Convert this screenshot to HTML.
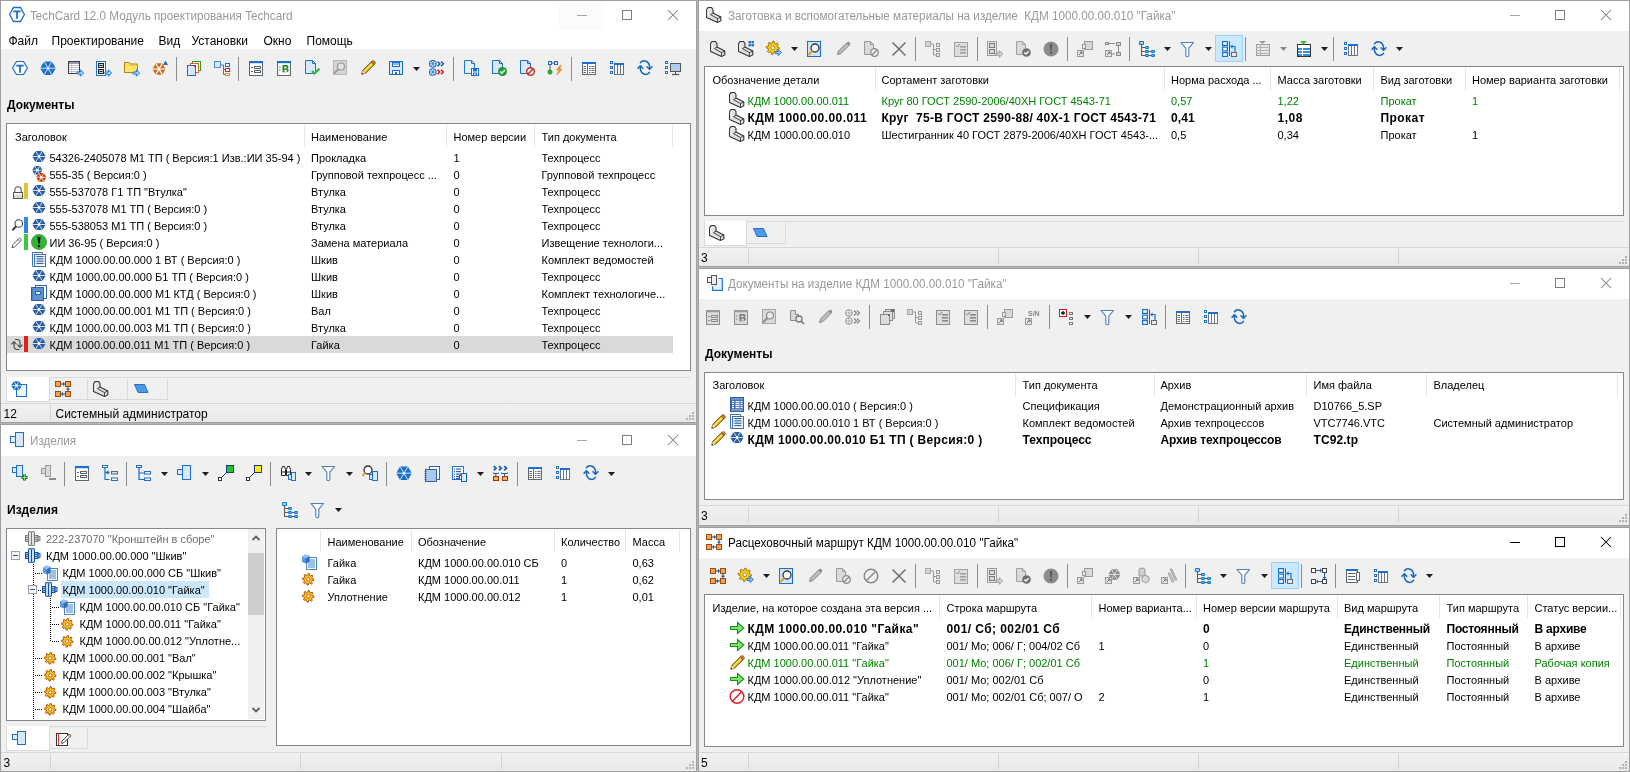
<!DOCTYPE html>
<html><head><meta charset="utf-8"><style>
html,body{margin:0;padding:0;width:1630px;height:772px;overflow:hidden;background:#f0f0f0;position:relative}
#w{position:absolute;left:0;top:0;width:1630px;height:772px;will-change:transform;overflow:hidden;background:#b6b6b6}
#w>div,#w>svg{position:absolute}
#w>svg{overflow:visible}
.t{white-space:pre;line-height:1;font-family:"Liberation Sans",sans-serif}
</style></head><body><div id="w">
<div style="left:0px;top:0px;width:697px;height:423px;background:#f0f0f0"></div>
<div style="left:0px;top:0px;width:697px;height:423px;border:1px solid #9f9f9f;box-sizing:border-box;"></div>
<div style="left:1px;top:1px;width:695px;height:29px;background:#fff"></div>
<svg style="left:9px;top:6px" width="16" height="16" viewBox="0 0 16 16"><polygon points="0.6,8.5 4.5,1.5 11.5,1.5 15.4,8.5 11.5,15.5 4.5,15.5" fill="#fbfbfb" stroke="#1c6fd1" stroke-width="1.3"/><path d="M4.3 4.5h7.4v1.8h-2.8v6.5h-1.8v-6.5h-2.8z" fill="#1c6fd1"/></svg>
<div class="t" style="left:30px;top:10.49px;font-size:12.3px;font-weight:400;color:#999;transform:scaleX(0.951);transform-origin:0 0;">TechCard 12.0 Модуль проектирования Techcard</div>
<div style="left:577px;top:15px;width:10px;height:1px;background:#a5a5a5"></div>
<div style="left:622px;top:10px;width:10px;height:10px;border:1px solid #7d7d7d;box-sizing:border-box;"></div>
<svg style="left:667px;top:9px" width="12" height="12" viewBox="0 0 12 12"><path d="M1 1L11 11M11 1L1 11" stroke="#7d7d7d" stroke-width="1.05" fill="none"/></svg>
<div style="left:1px;top:30px;width:695px;height:19px;background:#fff"></div>
<div style="left:559px;top:2px;width:45px;height:28px;background:#fbfbfb"></div>
<div style="left:577px;top:15px;width:10px;height:1px;background:#a5a5a5"></div>
<div class="t" style="left:8.5px;top:34.84px;font-size:12px;font-weight:400;color:#000;">Файл</div>
<div class="t" style="left:51.5px;top:34.84px;font-size:12px;font-weight:400;color:#000;">Проектирование</div>
<div class="t" style="left:158.5px;top:34.84px;font-size:12px;font-weight:400;color:#000;">Вид</div>
<div class="t" style="left:191.5px;top:34.84px;font-size:12px;font-weight:400;color:#000;">Установки</div>
<div class="t" style="left:263.5px;top:34.84px;font-size:12px;font-weight:400;color:#000;">Окно</div>
<div class="t" style="left:306.5px;top:34.84px;font-size:12px;font-weight:400;color:#000;">Помощь</div>
<svg style="left:12px;top:60px" width="16" height="16" viewBox="0 0 16 16"><polygon points="0.6,8 4.5,1.5 11.5,1.5 15.4,8 11.5,14.5 4.5,14.5" fill="#fff" stroke="#1c6fd1" stroke-width="1.2"/><path d="M4.3 4.8h7.4v1.7h-2.8v6.2h-1.8v-6.2h-2.8z" fill="#1c6fd1"/></svg>
<svg style="left:40px;top:60px" width="16" height="16" viewBox="0 0 16 16"><polygon points="0.20,8.20 4.10,1.50 11.90,1.50 15.80,8.20 11.90,14.90 4.10,14.90" fill="#1a6fc9"/><line x1="-0.80" y1="8.2" x2="16.80" y2="8.2" stroke="#fff" stroke-width="0.8"/><line x1="4.10" y1="1.50" x2="11.90" y2="14.90" stroke="#fff" stroke-width="0.8"/><line x1="11.90" y1="1.50" x2="4.10" y2="14.90" stroke="#fff" stroke-width="0.8"/><circle cx="8" cy="8.2" r="1.3" fill="#fff"/></svg>
<svg style="left:68px;top:60px" width="16" height="16" viewBox="0 0 16 16"><rect x="0.5" y="1.5" width="11" height="12" fill="#fff" stroke="#3c3c3c" stroke-width="1"/><rect x="1" y="2" width="10" height="2" fill="#9a9ab8"/><line x1="1" y1="5.5" x2="11" y2="5.5" stroke="#c4c4d8" stroke-width="1"/><line x1="1" y1="7.5" x2="11" y2="7.5" stroke="#c4c4d8" stroke-width="1"/><line x1="1" y1="9.5" x2="11" y2="9.5" stroke="#c4c4d8" stroke-width="1"/><line x1="1" y1="11.5" x2="11" y2="11.5" stroke="#c4c4d8" stroke-width="1"/><line x1="3.5" y1="4" x2="3.5" y2="13" stroke="#c4c4d8" stroke-width="1"/><path d="M9.0 12.0h3.3v-2.2l3.4 3.2l-3.4 3.2v-2.2h-3.3z" fill="#a8d4ff" stroke="#1c78e0" stroke-width="1" stroke-linejoin="miter"/></svg>
<svg style="left:96px;top:60px" width="16" height="16" viewBox="0 0 16 16"><rect x="0.5" y="1.5" width="9" height="14" fill="#fff" stroke="#1c6fd1" stroke-width="1"/><rect x="2.5" y="3.5" width="5" height="4" fill="#d0d0d0" stroke="#222" stroke-width="1"/><rect x="2.5" y="9.5" width="5" height="4" fill="#d0d0d0" stroke="#222" stroke-width="1"/><rect x="3.5" y="5" width="3" height="1" fill="#222"/><rect x="3.5" y="11" width="3" height="1" fill="#222"/><path d="M9.0 12.0h3.3v-2.2l3.4 3.2l-3.4 3.2v-2.2h-3.3z" fill="#a8d4ff" stroke="#1c78e0" stroke-width="1" stroke-linejoin="miter"/></svg>
<svg style="left:124px;top:60px" width="16" height="16" viewBox="0 0 16 16"><path d="M0.5 2.5h4.5l1.2 1.5h7.3v8.5h-13z" fill="#ffe46a" stroke="#a8840e"/><path d="M1 5.5h12.5" stroke="#f3d24a"/><path d="M9.0 12.0h3.3v-2.2l3.4 3.2l-3.4 3.2v-2.2h-3.3z" fill="#a8d4ff" stroke="#1c78e0" stroke-width="1" stroke-linejoin="miter"/></svg>
<svg style="left:152px;top:60px" width="16" height="16" viewBox="0 0 16 16"><polygon points="13.50,9.00 10.25,14.63 3.75,14.63 0.50,9.00 3.75,3.37 10.25,3.37" fill="#d2691e"/><line x1="0.50" y1="9.00" x2="13.50" y2="9.00" stroke="#fff" stroke-width="1.1"/><line x1="3.75" y1="3.37" x2="10.25" y2="14.63" stroke="#fff" stroke-width="1.1"/><line x1="10.25" y1="3.37" x2="3.75" y2="14.63" stroke="#fff" stroke-width="1.1"/><path d="M11 5l2.5-4.5l2.5 4.5z" fill="#1c6fd1"/></svg>
<div style="left:176px;top:57px;width:1px;height:24px;background:#8c8c8c"></div>
<svg style="left:186px;top:60px" width="16" height="16" viewBox="0 0 16 16"><rect x="6.5" y="1.5" width="8" height="9" fill="#fff" stroke="#2e9a2e" stroke-width="1"/><rect x="4.5" y="3.5" width="8" height="9" fill="#fff" stroke="#d2691e" stroke-width="1"/><rect x="1.5" y="5.5" width="8" height="10" fill="#d6e8fa" stroke="#1c6fd1" stroke-width="1"/><rect x="8" y="5" width="2" height="2" fill="#d22"/></svg>
<svg style="left:214px;top:60px" width="16" height="16" viewBox="0 0 16 16"><rect x="0.5" y="1.5" width="6" height="6" fill="#d6e8fa" stroke="#4a90e2" stroke-width="1"/><path d="M7 5h2.5v9.5h2M9.5 9.5h2" stroke="#7a6a5a" fill="none"/><rect x="11.5" y="3.5" width="4" height="3" fill="#fff" stroke="#1c6fd1" stroke-width="1"/><rect x="11.5" y="8.5" width="4" height="3" fill="#fff" stroke="#d22" stroke-width="1"/><rect x="11.5" y="13.5" width="4" height="2" fill="#fff3c0" stroke="#c8961e" stroke-width="1"/></svg>
<div style="left:238px;top:57px;width:1px;height:24px;background:#8c8c8c"></div>
<svg style="left:248px;top:60px" width="16" height="16" viewBox="0 0 16 16"><rect x="1.5" y="1.5" width="13" height="14" fill="#fff" stroke="#5a6670" stroke-width="1"/><rect x="1" y="1" width="14" height="2.2" fill="#1c6fd1"/><line x1="3" y1="7.5" x2="5" y2="7.5" stroke="#5a6670" stroke-width="1"/><rect x="6.5" y="6.5" width="6" height="2" fill="none" stroke="#5a6670" stroke-width="1"/><line x1="3" y1="11.5" x2="5" y2="11.5" stroke="#5a6670" stroke-width="1"/><rect x="6.5" y="10.5" width="6" height="2" fill="none" stroke="#5a6670" stroke-width="1"/></svg>
<svg style="left:276px;top:60px" width="16" height="16" viewBox="0 0 16 16"><rect x="1.5" y="1.5" width="13" height="14" fill="#fff" stroke="#5a6670" stroke-width="1"/><rect x="1" y="1" width="14" height="2.2" fill="#1c6fd1"/><line x1="3" y1="7" x2="4.5" y2="7" stroke="#5a6670" stroke-width="1"/><line x1="3" y1="10" x2="4.5" y2="10" stroke="#5a6670" stroke-width="1"/><path d="M6.5 5h3.6c1.6 0 2.4.8 2.4 1.9c0 .8-.5 1.3-1.1 1.5c.8.2 1.4.8 1.4 1.7c0 1.3-1 2.1-2.6 2.1h-3.7zM8.3 6.4v2h1.5c.6 0 .9-.4.9-1s-.3-1-.9-1zM8.3 9.7v2.1h1.7c.7 0 1-.4 1-1.05s-.3-1.05-1-1.05z" fill="#1a8a1a"/></svg>
<svg style="left:304px;top:60px" width="16" height="16" viewBox="0 0 16 16"><path d="M1.5 0.5h7l3 3v10h-10z" fill="#d6e8fa" stroke="#1c6fd1"/><path d="M8.5 0.5v3h3" fill="none" stroke="#1c6fd1"/><path d="M8 11l2.5 2.5l5-5" stroke="#2db52d" stroke-width="2" fill="none"/></svg>
<svg style="left:332px;top:60px" width="16" height="16" viewBox="0 0 16 16"><rect x="1.5" y="0.5" width="13" height="14" fill="#d5d5d5" stroke="#b5b5b5" stroke-width="1"/><circle cx="9" cy="6.5" r="3.5" fill="#e4e4e4" stroke="#9a9a9a" stroke-width="1.2"/><path d="M6.5 9l-4.5 4.5" stroke="#9a9a9a" stroke-width="2"/></svg>
<svg style="left:360px;top:60px" width="16" height="16" viewBox="0 0 16 16"><path d="M1.8 14.2l.9-3.6l8.6-8.6l2.7 2.7l-8.6 8.6z" fill="#f7c21b" stroke="#3a2a00" stroke-width=".9" stroke-linejoin="round"/><path d="M4 11.5l8-8" stroke="#fff6b0" stroke-width="1"/><path d="M11.3 2l2.7 2.7l1-1c.6-.6.6-1.4 0-2l-.7-.7c-.6-.6-1.4-.6-2 0z" fill="#d07a3a" stroke="#6b3a10" stroke-width=".6"/><path d="M1.8 14.2l.9-3.4l2.5 2.5z" fill="#f4e6c8"/><path d="M1.8 14.2l.4-1.4l1 1z" fill="#111"/></svg>
<svg style="left:388px;top:60px" width="16" height="16" viewBox="0 0 16 16"><rect x="1.5" y="1.5" width="13" height="13" fill="#d6e8fa" stroke="#1c6fd1" stroke-width="1"/><rect x="4.5" y="2.5" width="7" height="4" fill="#fff" stroke="#1c6fd1" stroke-width="1"/><line x1="5" y1="4" x2="11" y2="4" stroke="#1c6fd1" stroke-width="1"/><rect x="4.5" y="10.5" width="7" height="4" fill="#fff" stroke="#1c6fd1" stroke-width="1"/><rect x="7" y="12" width="2" height="2" fill="#1c6fd1"/></svg>
<svg style="left:413.0px;top:67px" width="7" height="4" viewBox="0 0 7 4"><path d="M0 0H7L3.5 4Z" fill="#1e1e1e"/></svg>
<svg style="left:429px;top:60px" width="16" height="16" viewBox="0 0 16 16"><circle cx="3.8" cy="3.8" r="3.3" fill="#fff" stroke="#1c6fd1" stroke-width="1.1"/><path d="M0.5 3.8h6.6M2.15 0.9620000000000002l3.3 5.675999999999999M5.449999999999999 0.9620000000000002l-3.3 5.675999999999999" stroke="#1c6fd1" stroke-width=".8"/><circle cx="3.8" cy="12" r="3.3" fill="#fff" stroke="#1c6fd1" stroke-width="1.1"/><path d="M0.5 12h6.6M2.15 9.162l3.3 5.675999999999999M5.449999999999999 9.162l-3.3 5.675999999999999" stroke="#1c6fd1" stroke-width=".8"/><path d="M8.5 1.5l2.3 2.3l-2.3 2.3M12 1.5l2.3 2.3l-2.3 2.3" stroke="#1c5fb0" stroke-width="1.5" fill="none"/><path d="M8.5 9.7l2.3 2.3l-2.3 2.3M12 9.7l2.3 2.3l-2.3 2.3" stroke="#d01818" stroke-width="1.5" fill="none"/></svg>
<div style="left:453px;top:57px;width:1px;height:24px;background:#8c8c8c"></div>
<svg style="left:463px;top:60px" width="16" height="16" viewBox="0 0 16 16"><path d="M1.5 0.5h7l3 3v10h-10z" fill="#e4f0fb" stroke="#1c78e0"/><path d="M8.5 0.5v3h3" fill="none" stroke="#1c78e0"/><rect x="8.5" y="8.5" width="7" height="7" fill="#fff" stroke="#1c6fd1" stroke-width="1"/><rect x="10" y="9" width="4" height="2.5" fill="#1c6fd1"/><rect x="10.5" y="13.0" width="3" height="2.5" fill="#cfe4fa" stroke="#1c6fd1" stroke-width="1"/></svg>
<svg style="left:491px;top:60px" width="16" height="16" viewBox="0 0 16 16"><path d="M1.5 0.5h7l3 3v10h-10z" fill="#d6e8fa" stroke="#1c6fd1"/><path d="M8.5 0.5v3h3" fill="none" stroke="#1c6fd1"/><circle cx="11.5" cy="11.5" r="4.5" fill="#1c9a2c"/><path d="M9.2 11.5l1.6 1.6l3-3" stroke="#fff" stroke-width="1.5" fill="none"/></svg>
<svg style="left:519px;top:60px" width="16" height="16" viewBox="0 0 16 16"><path d="M1.5 0.5h7l3 3v10h-10z" fill="#d6e8fa" stroke="#1c6fd1"/><path d="M8.5 0.5v3h3" fill="none" stroke="#1c6fd1"/><circle cx="11.5" cy="11.5" r="3.8" fill="#fff" stroke="#d21f1f" stroke-width="1.4"/><path d="M9 14l5-5" stroke="#d21f1f" stroke-width="1.4"/></svg>
<svg style="left:547px;top:60px" width="16" height="16" viewBox="0 0 16 16"><rect x="1.5" y="1.5" width="3" height="3" fill="#cfe6fb" stroke="#1c6fd1" stroke-width="1"/><rect x="7.5" y="1.5" width="3" height="3" fill="#cfe6fb" stroke="#1c6fd1" stroke-width="1"/><line x1="5" y1="3" x2="7" y2="3" stroke="#555" stroke-width="1"/><line x1="3" y1="5" x2="3" y2="10" stroke="#555" stroke-width="1"/><circle cx="3" cy="12" r="2.2" fill="#2db52d" stroke="#1a7a1a" stroke-width=".6"/><path d="M13.5 5l-4 5h2.5l-2 5l5-6h-2.5l1.5-4z" fill="#f0a020" stroke="#c86a10" stroke-width=".5"/></svg>
<div style="left:571px;top:57px;width:1px;height:24px;background:#8c8c8c"></div>
<svg style="left:581px;top:60px" width="16" height="16" viewBox="0 0 16 16"><rect x="1.5" y="2.5" width="13" height="12" fill="#fff" stroke="#5f6a74" stroke-width="1"/><rect x="1" y="2" width="14" height="2" fill="#1c6fd1"/><line x1="6.5" y1="4" x2="6.5" y2="15" stroke="#5f6a74" stroke-width="1"/><line x1="2.5" y1="6.5" x2="5" y2="6.5" stroke="#5f6a74" stroke-width="1"/><line x1="8" y1="6.5" x2="9.5" y2="6.5" stroke="#5f6a74" stroke-width="1"/><line x1="10.5" y1="6.5" x2="13.5" y2="6.5" stroke="#5f6a74" stroke-width="1"/><line x1="2.5" y1="8.5" x2="5" y2="8.5" stroke="#5f6a74" stroke-width="1"/><line x1="8" y1="8.5" x2="9.5" y2="8.5" stroke="#5f6a74" stroke-width="1"/><line x1="10.5" y1="8.5" x2="13.5" y2="8.5" stroke="#5f6a74" stroke-width="1"/><line x1="2.5" y1="10.5" x2="5" y2="10.5" stroke="#5f6a74" stroke-width="1"/><line x1="8" y1="10.5" x2="9.5" y2="10.5" stroke="#5f6a74" stroke-width="1"/><line x1="10.5" y1="10.5" x2="13.5" y2="10.5" stroke="#5f6a74" stroke-width="1"/><line x1="2.5" y1="12.5" x2="5" y2="12.5" stroke="#5f6a74" stroke-width="1"/><line x1="8" y1="12.5" x2="9.5" y2="12.5" stroke="#5f6a74" stroke-width="1"/><line x1="10.5" y1="12.5" x2="13.5" y2="12.5" stroke="#5f6a74" stroke-width="1"/></svg>
<svg style="left:609px;top:60px" width="16" height="16" viewBox="0 0 16 16"><rect x="1.5" y="1.5" width="2" height="2" fill="#fff" stroke="#1c6fd1" stroke-width="1"/><rect x="1.5" y="6.5" width="2" height="2" fill="#fff" stroke="#1c6fd1" stroke-width="1"/><rect x="1.5" y="11.5" width="2" height="2" fill="#fff" stroke="#1c6fd1" stroke-width="1"/><rect x="5.5" y="3.5" width="9" height="11" fill="#fff" stroke="#6a7480" stroke-width="1"/><rect x="5" y="3" width="10" height="2" fill="#1c6fd1"/><line x1="8.5" y1="5" x2="8.5" y2="15" stroke="#6a7480" stroke-width="1"/><line x1="11.5" y1="5" x2="11.5" y2="15" stroke="#6a7480" stroke-width="1"/></svg>
<svg style="left:637px;top:60px" width="16" height="16" viewBox="0 0 16 16"><g fill="none" stroke="#1565c0" stroke-width="1.5" stroke-linecap="round" stroke-linejoin="round"><path d="M3.4 2.8C5.5 0 10.8 -0.2 12.5 5.5V9"/><path d="M10 6.8L12.5 9.3L15 6.8"/><path d="M12.5 12.4C10.5 15.4 5 15.4 3.4 9.5V6"/><path d="M1 8.2L3.4 5.7L5.8 8.2"/></g></svg>
<svg style="left:665px;top:60px" width="16" height="16" viewBox="0 0 16 16"><rect x="0.5" y="1.5" width="2" height="2" fill="#fff" stroke="#1c6fd1" stroke-width="1"/><rect x="0.5" y="6.5" width="2" height="2" fill="#fff" stroke="#1c6fd1" stroke-width="1"/><rect x="0.5" y="11.5" width="2" height="2" fill="#fff" stroke="#1c6fd1" stroke-width="1"/><rect x="5.5" y="3.5" width="10" height="8" fill="#aed0ee" stroke="#555" stroke-width="1"/><line x1="10.5" y1="12" x2="10.5" y2="14" stroke="#555" stroke-width="1"/><line x1="7" y1="14.5" x2="14" y2="14.5" stroke="#555" stroke-width="1.2"/></svg>
<div class="t" style="left:7px;top:98.84px;font-size:12px;font-weight:700;color:#000;">Документы</div>
<div style="left:6px;top:123px;width:685px;height:248px;border:1px solid #828790;box-sizing:border-box;background:#fff;"></div>
<div class="t" style="left:15px;top:131.69px;font-size:11px;font-weight:400;color:#000;">Заголовок</div>
<div style="left:304px;top:125px;width:1px;height:22px;background:#e5e5e5"></div>
<div class="t" style="left:311px;top:131.69px;font-size:11px;font-weight:400;color:#000;">Наименование</div>
<div style="left:446px;top:125px;width:1px;height:22px;background:#e5e5e5"></div>
<div class="t" style="left:453.5px;top:131.69px;font-size:11px;font-weight:400;color:#000;">Номер версии</div>
<div style="left:534px;top:125px;width:1px;height:22px;background:#e5e5e5"></div>
<div class="t" style="left:541.5px;top:131.69px;font-size:11px;font-weight:400;color:#000;">Тип документа</div>
<div style="left:672px;top:125px;width:1px;height:22px;background:#e5e5e5"></div>
<div style="left:7px;top:336px;width:666px;height:17px;background:#d9d9d9"></div>
<svg style="left:31px;top:149px" width="16" height="16" viewBox="0 0 16 16"><polygon points="1.20,7.50 4.60,1.90 11.40,1.90 14.80,7.50 11.40,13.10 4.60,13.10" fill="#2a5fa6"/><line x1="0.20" y1="7.5" x2="15.80" y2="7.5" stroke="#fff" stroke-width="0.8"/><line x1="4.60" y1="1.90" x2="11.40" y2="13.10" stroke="#fff" stroke-width="0.8"/><line x1="11.40" y1="1.90" x2="4.60" y2="13.10" stroke="#fff" stroke-width="0.8"/><circle cx="8" cy="7.5" r="1.3" fill="#fff"/></svg>
<svg style="left:31px;top:166px" width="16" height="16" viewBox="0 0 16 16"><polygon points="1.10,4.30 3.70,0.00 8.90,0.00 11.50,4.30 8.90,8.60 3.70,8.60" fill="#2a5fa6"/><line x1="0.10" y1="4.3" x2="12.50" y2="4.3" stroke="#fff" stroke-width="0.7"/><line x1="3.70" y1="0.00" x2="8.90" y2="8.60" stroke="#fff" stroke-width="0.7"/><line x1="8.90" y1="0.00" x2="3.70" y2="8.60" stroke="#fff" stroke-width="0.7"/><circle cx="6.3" cy="4.3" r="1.3" fill="#fff"/><polygon points="5.10,11.30 7.70,6.90 12.90,6.90 15.50,11.30 12.90,15.70 7.70,15.70" fill="#c84a12"/><line x1="4.10" y1="11.3" x2="16.50" y2="11.3" stroke="#fff" stroke-width="0.7"/><line x1="7.70" y1="6.90" x2="12.90" y2="15.70" stroke="#fff" stroke-width="0.7"/><line x1="12.90" y1="6.90" x2="7.70" y2="15.70" stroke="#fff" stroke-width="0.7"/><circle cx="10.3" cy="11.3" r="1.3" fill="#fff"/></svg>
<svg style="left:31px;top:183px" width="16" height="16" viewBox="0 0 16 16"><polygon points="1.20,7.50 4.60,1.90 11.40,1.90 14.80,7.50 11.40,13.10 4.60,13.10" fill="#2a5fa6"/><line x1="0.20" y1="7.5" x2="15.80" y2="7.5" stroke="#fff" stroke-width="0.8"/><line x1="4.60" y1="1.90" x2="11.40" y2="13.10" stroke="#fff" stroke-width="0.8"/><line x1="11.40" y1="1.90" x2="4.60" y2="13.10" stroke="#fff" stroke-width="0.8"/><circle cx="8" cy="7.5" r="1.3" fill="#fff"/></svg>
<svg style="left:31px;top:200px" width="16" height="16" viewBox="0 0 16 16"><polygon points="1.20,7.50 4.60,1.90 11.40,1.90 14.80,7.50 11.40,13.10 4.60,13.10" fill="#2a5fa6"/><line x1="0.20" y1="7.5" x2="15.80" y2="7.5" stroke="#fff" stroke-width="0.8"/><line x1="4.60" y1="1.90" x2="11.40" y2="13.10" stroke="#fff" stroke-width="0.8"/><line x1="11.40" y1="1.90" x2="4.60" y2="13.10" stroke="#fff" stroke-width="0.8"/><circle cx="8" cy="7.5" r="1.3" fill="#fff"/></svg>
<svg style="left:31px;top:217px" width="16" height="16" viewBox="0 0 16 16"><polygon points="1.20,7.50 4.60,1.90 11.40,1.90 14.80,7.50 11.40,13.10 4.60,13.10" fill="#2a5fa6"/><line x1="0.20" y1="7.5" x2="15.80" y2="7.5" stroke="#fff" stroke-width="0.8"/><line x1="4.60" y1="1.90" x2="11.40" y2="13.10" stroke="#fff" stroke-width="0.8"/><line x1="11.40" y1="1.90" x2="4.60" y2="13.10" stroke="#fff" stroke-width="0.8"/><circle cx="8" cy="7.5" r="1.3" fill="#fff"/></svg>
<svg style="left:31px;top:234px" width="16" height="16" viewBox="0 0 16 16"><circle cx="8" cy="8" r="7.6" fill="#33b533"/><circle cx="8" cy="8" r="7.6" fill="none" stroke="#1f8a1f" stroke-width=".6"/><path d="M6.5 2.8h3l-.7 6.7h-1.6z" fill="#0a0a0a"/><circle cx="8" cy="12" r="1.3" fill="#0a0a0a"/></svg>
<svg style="left:31px;top:251px" width="16" height="16" viewBox="0 0 16 16"><path d="M1.5 1.5h10v2h-8v12h-2z" fill="#fff" stroke="#3f72b5"/><rect x="3.5" y="3.5" width="11" height="12" fill="#fff" stroke="#3f72b5" stroke-width="1"/><rect x="6" y="5" width="6" height="1.2" fill="#2f62a8"/><rect x="4.8" y="5" width="0.8" height="1.2" fill="#2f62a8"/><rect x="12.5" y="5" width="0.8" height="1.2" fill="#2f62a8"/><rect x="6" y="7.3" width="6" height="1.2" fill="#2f62a8"/><rect x="4.8" y="7.3" width="0.8" height="1.2" fill="#2f62a8"/><rect x="12.5" y="7.3" width="0.8" height="1.2" fill="#2f62a8"/><rect x="6" y="9.6" width="6" height="1.2" fill="#2f62a8"/><rect x="4.8" y="9.6" width="0.8" height="1.2" fill="#2f62a8"/><rect x="12.5" y="9.6" width="0.8" height="1.2" fill="#2f62a8"/><rect x="6" y="11.9" width="6" height="1.2" fill="#2f62a8"/><rect x="4.8" y="11.9" width="0.8" height="1.2" fill="#2f62a8"/><rect x="12.5" y="11.9" width="0.8" height="1.2" fill="#2f62a8"/></svg>
<svg style="left:31px;top:268px" width="16" height="16" viewBox="0 0 16 16"><polygon points="1.20,7.50 4.60,1.90 11.40,1.90 14.80,7.50 11.40,13.10 4.60,13.10" fill="#2a5fa6"/><line x1="0.20" y1="7.5" x2="15.80" y2="7.5" stroke="#fff" stroke-width="0.8"/><line x1="4.60" y1="1.90" x2="11.40" y2="13.10" stroke="#fff" stroke-width="0.8"/><line x1="11.40" y1="1.90" x2="4.60" y2="13.10" stroke="#fff" stroke-width="0.8"/><circle cx="8" cy="7.5" r="1.3" fill="#fff"/></svg>
<svg style="left:31px;top:285px" width="16" height="16" viewBox="0 0 16 16"><rect x="4.5" y="0.5" width="11" height="13" fill="#fff" stroke="#2f62a8" stroke-width="1"/><rect x="0.5" y="2.5" width="12" height="13" fill="#5b93d4" stroke="#2f62a8"/><rect x="0" y="4" width="1.6" height="0.9" fill="#1f4f98"/><rect x="0" y="6" width="1.6" height="0.9" fill="#1f4f98"/><rect x="0" y="8" width="1.6" height="0.9" fill="#1f4f98"/><rect x="0" y="10" width="1.6" height="0.9" fill="#1f4f98"/><rect x="0" y="12" width="1.6" height="0.9" fill="#1f4f98"/><rect x="0" y="14" width="1.6" height="0.9" fill="#1f4f98"/><rect x="4.5" y="6.5" width="5" height="3" fill="#dbe8f7" stroke="#2f62a8" stroke-width="1"/></svg>
<svg style="left:31px;top:302px" width="16" height="16" viewBox="0 0 16 16"><polygon points="1.20,7.50 4.60,1.90 11.40,1.90 14.80,7.50 11.40,13.10 4.60,13.10" fill="#2a5fa6"/><line x1="0.20" y1="7.5" x2="15.80" y2="7.5" stroke="#fff" stroke-width="0.8"/><line x1="4.60" y1="1.90" x2="11.40" y2="13.10" stroke="#fff" stroke-width="0.8"/><line x1="11.40" y1="1.90" x2="4.60" y2="13.10" stroke="#fff" stroke-width="0.8"/><circle cx="8" cy="7.5" r="1.3" fill="#fff"/></svg>
<svg style="left:31px;top:319px" width="16" height="16" viewBox="0 0 16 16"><polygon points="1.20,7.50 4.60,1.90 11.40,1.90 14.80,7.50 11.40,13.10 4.60,13.10" fill="#2a5fa6"/><line x1="0.20" y1="7.5" x2="15.80" y2="7.5" stroke="#fff" stroke-width="0.8"/><line x1="4.60" y1="1.90" x2="11.40" y2="13.10" stroke="#fff" stroke-width="0.8"/><line x1="11.40" y1="1.90" x2="4.60" y2="13.10" stroke="#fff" stroke-width="0.8"/><circle cx="8" cy="7.5" r="1.3" fill="#fff"/></svg>
<svg style="left:31px;top:336px" width="16" height="16" viewBox="0 0 16 16"><polygon points="1.20,7.50 4.60,1.90 11.40,1.90 14.80,7.50 11.40,13.10 4.60,13.10" fill="#2a5fa6"/><line x1="0.20" y1="7.5" x2="15.80" y2="7.5" stroke="#fff" stroke-width="0.8"/><line x1="4.60" y1="1.90" x2="11.40" y2="13.10" stroke="#fff" stroke-width="0.8"/><line x1="11.40" y1="1.90" x2="4.60" y2="13.10" stroke="#fff" stroke-width="0.8"/><circle cx="8" cy="7.5" r="1.3" fill="#fff"/></svg>
<svg style="left:9px;top:183.5px" width="16" height="16" viewBox="0 0 16 16"><path d="M5.8 8.5V6a3.2 3.2 0 0 1 6.4 0v2.5" fill="none" stroke="#555" stroke-width="1.1"/><rect x="4.5" y="8.5" width="9" height="6" fill="#f6f6f6" stroke="#555"/><rect x="5" y="11" width="8" height="3" fill="#d9d9d9"/></svg>
<div style="left:24px;top:183px;width:4px;height:16px;background:#e6c22e"></div>
<svg style="left:9px;top:217.5px" width="16" height="16" viewBox="0 0 16 16"><circle cx="9.8" cy="5.5" r="3.8" fill="#fff" stroke="#444" stroke-width="1.1"/><path d="M7.2 8.3l-3.8 4" stroke="#444" stroke-width="2"/></svg>
<div style="left:24px;top:217px;width:4px;height:16px;background:#2e86de"></div>
<svg style="left:9px;top:234.5px" width="16" height="16" viewBox="0 0 16 16"><path d="M3 12.6l.7-2.8l6.8-6.8l2.1 2.1l-6.8 6.8z" fill="#fff" stroke="#555" stroke-width="1"/><path d="M9 4.5l2.1 2.1" stroke="#555" stroke-width=".8"/></svg>
<div style="left:24px;top:234px;width:4px;height:16px;background:#3cc83c"></div>
<svg style="left:9px;top:336.5px" width="16" height="16" viewBox="0 0 16 16"><g fill="none" stroke="#444" stroke-width="1.1" stroke-linejoin="round"><path d="M5 5v4.5a3 3 0 0 0 3 3h2.5"/><path d="M2.5 7.3L5 4.6L7.5 7.3"/><path d="M6 2.5h2a3 3 0 0 1 3 3V9.5"/><path d="M8.5 7.6L11 10.3L13.5 7.6"/></g></svg>
<div style="left:24px;top:336px;width:4px;height:16px;background:#e02020"></div>
<div class="t" style="left:49.5px;top:152.69px;font-size:11px;font-weight:400;color:#000;">54326-2405078 М1 ТП ( Версия:1 Изв.:ИИ 35-94 )</div>
<div class="t" style="left:311px;top:152.69px;font-size:11px;font-weight:400;color:#000;">Прокладка</div>
<div class="t" style="left:453.5px;top:152.69px;font-size:11px;font-weight:400;color:#000;">1</div>
<div class="t" style="left:541.5px;top:152.69px;font-size:11px;font-weight:400;color:#000;">Техпроцесс</div>
<div class="t" style="left:49.5px;top:169.69px;font-size:11px;font-weight:400;color:#000;">555-35 ( Версия:0 )</div>
<div class="t" style="left:311px;top:169.69px;font-size:11px;font-weight:400;color:#000;">Групповой техпроцесс ...</div>
<div class="t" style="left:453.5px;top:169.69px;font-size:11px;font-weight:400;color:#000;">0</div>
<div class="t" style="left:541.5px;top:169.69px;font-size:11px;font-weight:400;color:#000;">Групповой техпроцесс</div>
<div class="t" style="left:49.5px;top:186.69px;font-size:11px;font-weight:400;color:#000;">555-537078 Г1 ТП &quot;Втулка&quot;</div>
<div class="t" style="left:311px;top:186.69px;font-size:11px;font-weight:400;color:#000;">Втулка</div>
<div class="t" style="left:453.5px;top:186.69px;font-size:11px;font-weight:400;color:#000;">0</div>
<div class="t" style="left:541.5px;top:186.69px;font-size:11px;font-weight:400;color:#000;">Техпроцесс</div>
<div class="t" style="left:49.5px;top:203.69px;font-size:11px;font-weight:400;color:#000;">555-537078 М1 ТП ( Версия:0 )</div>
<div class="t" style="left:311px;top:203.69px;font-size:11px;font-weight:400;color:#000;">Втулка</div>
<div class="t" style="left:453.5px;top:203.69px;font-size:11px;font-weight:400;color:#000;">0</div>
<div class="t" style="left:541.5px;top:203.69px;font-size:11px;font-weight:400;color:#000;">Техпроцесс</div>
<div class="t" style="left:49.5px;top:220.69px;font-size:11px;font-weight:400;color:#000;">555-538053 М1 ТП ( Версия:0 )</div>
<div class="t" style="left:311px;top:220.69px;font-size:11px;font-weight:400;color:#000;">Втулка</div>
<div class="t" style="left:453.5px;top:220.69px;font-size:11px;font-weight:400;color:#000;">0</div>
<div class="t" style="left:541.5px;top:220.69px;font-size:11px;font-weight:400;color:#000;">Техпроцесс</div>
<div class="t" style="left:49.5px;top:237.69px;font-size:11px;font-weight:400;color:#000;">ИИ 36-95 ( Версия:0 )</div>
<div class="t" style="left:311px;top:237.69px;font-size:11px;font-weight:400;color:#000;">Замена материала</div>
<div class="t" style="left:453.5px;top:237.69px;font-size:11px;font-weight:400;color:#000;">0</div>
<div class="t" style="left:541.5px;top:237.69px;font-size:11px;font-weight:400;color:#000;">Извещение технологи...</div>
<div class="t" style="left:49.5px;top:254.69px;font-size:11px;font-weight:400;color:#000;">КДМ 1000.00.00.000 1 ВТ ( Версия:0 )</div>
<div class="t" style="left:311px;top:254.69px;font-size:11px;font-weight:400;color:#000;">Шкив</div>
<div class="t" style="left:453.5px;top:254.69px;font-size:11px;font-weight:400;color:#000;">0</div>
<div class="t" style="left:541.5px;top:254.69px;font-size:11px;font-weight:400;color:#000;">Комплект ведомостей</div>
<div class="t" style="left:49.5px;top:271.69px;font-size:11px;font-weight:400;color:#000;">КДМ 1000.00.00.000 Б1 ТП ( Версия:0 )</div>
<div class="t" style="left:311px;top:271.69px;font-size:11px;font-weight:400;color:#000;">Шкив</div>
<div class="t" style="left:453.5px;top:271.69px;font-size:11px;font-weight:400;color:#000;">0</div>
<div class="t" style="left:541.5px;top:271.69px;font-size:11px;font-weight:400;color:#000;">Техпроцесс</div>
<div class="t" style="left:49.5px;top:288.69px;font-size:11px;font-weight:400;color:#000;">КДМ 1000.00.00.000 М1 КТД ( Версия:0 )</div>
<div class="t" style="left:311px;top:288.69px;font-size:11px;font-weight:400;color:#000;">Шкив</div>
<div class="t" style="left:453.5px;top:288.69px;font-size:11px;font-weight:400;color:#000;">0</div>
<div class="t" style="left:541.5px;top:288.69px;font-size:11px;font-weight:400;color:#000;">Комплект технологиче...</div>
<div class="t" style="left:49.5px;top:305.69px;font-size:11px;font-weight:400;color:#000;">КДМ 1000.00.00.001 М1 ТП ( Версия:0 )</div>
<div class="t" style="left:311px;top:305.69px;font-size:11px;font-weight:400;color:#000;">Вал</div>
<div class="t" style="left:453.5px;top:305.69px;font-size:11px;font-weight:400;color:#000;">0</div>
<div class="t" style="left:541.5px;top:305.69px;font-size:11px;font-weight:400;color:#000;">Техпроцесс</div>
<div class="t" style="left:49.5px;top:322.69px;font-size:11px;font-weight:400;color:#000;">КДМ 1000.00.00.003 М1 ТП ( Версия:0 )</div>
<div class="t" style="left:311px;top:322.69px;font-size:11px;font-weight:400;color:#000;">Втулка</div>
<div class="t" style="left:453.5px;top:322.69px;font-size:11px;font-weight:400;color:#000;">0</div>
<div class="t" style="left:541.5px;top:322.69px;font-size:11px;font-weight:400;color:#000;">Техпроцесс</div>
<div class="t" style="left:49.5px;top:339.69px;font-size:11px;font-weight:400;color:#000;">КДМ 1000.00.00.011 М1 ТП ( Версия:0 )</div>
<div class="t" style="left:311px;top:339.69px;font-size:11px;font-weight:400;color:#000;">Гайка</div>
<div class="t" style="left:453.5px;top:339.69px;font-size:11px;font-weight:400;color:#000;">0</div>
<div class="t" style="left:541.5px;top:339.69px;font-size:11px;font-weight:400;color:#000;">Техпроцесс</div>
<div style="left:6px;top:377px;width:684px;height:1px;background:#dadada"></div>
<div style="left:6px;top:377px;width:44px;height:25px;background:#fff;border-left:1px solid #dadada;border-right:1px solid #dadada;border-bottom:1px solid #dadada;box-sizing:border-box"></div>
<svg style="left:11px;top:381px" width="16" height="16" viewBox="0 0 16 16"><rect x="5.5" y="3.5" width="10" height="12" fill="#eef5fc" stroke="#1c6fd1" stroke-width="1"/><polygon points="0.10,4.60 2.80,0.20 8.20,0.20 10.90,4.60 8.20,9.00 2.80,9.00" fill="#1a6fc9"/><line x1="-0.90" y1="4.6" x2="11.90" y2="4.6" stroke="#fff" stroke-width="0.7"/><line x1="2.80" y1="0.20" x2="8.20" y2="9.00" stroke="#fff" stroke-width="0.7"/><line x1="8.20" y1="0.20" x2="2.80" y2="9.00" stroke="#fff" stroke-width="0.7"/><circle cx="5.5" cy="4.6" r="1.3" fill="#fff"/></svg>
<div style="left:50px;top:399px;width:38px;height:1px;background:#dadada"></div>
<div style="left:87px;top:379px;width:1px;height:21px;background:#dadada"></div>
<svg style="left:54.5px;top:381px" width="16" height="16" viewBox="0 0 16 16"><rect x="0.5" y="0.5" width="5" height="5" fill="#f5a04a" stroke="#a14a0a" stroke-width="1"/><rect x="10.5" y="0.5" width="5" height="5" fill="#f5a04a" stroke="#a14a0a" stroke-width="1"/><rect x="0.5" y="10.5" width="5" height="5" fill="#f5a04a" stroke="#a14a0a" stroke-width="1"/><rect x="10.5" y="10.5" width="5" height="5" fill="#f5a04a" stroke="#a14a0a" stroke-width="1"/><path d="M6 3h2.5" stroke="#1f5fb3" stroke-width="1.2"/><path d="M8 0.8l2.2 2.2l-2.2 2.2z" fill="#1f5fb3"/><path d="M13 6v2" stroke="#1f5fb3" stroke-width="1.2"/><path d="M10.8 7.8l2.2 2.2l2.2-2.2z" fill="#1f5fb3"/><path d="M10 13h-2.5" stroke="#1f5fb3" stroke-width="1.2"/><path d="M8 10.8l-2.2 2.2l2.2 2.2z" fill="#1f5fb3"/></svg>
<div style="left:88px;top:399px;width:40px;height:1px;background:#dadada"></div>
<div style="left:127px;top:379px;width:1px;height:21px;background:#dadada"></div>
<svg style="left:92.5px;top:381px" width="16" height="16" viewBox="0 0 16 16"><path d="M0.6 2.5L2 0.6H5.6L7 2.5V6L14.8 10V13.8L11.5 15.4L0.6 10.4Z" fill="#e0e0e0" stroke="#333" stroke-width="1.1" stroke-linejoin="round"/><path d="M4.5 7.6L7 6M4.5 7.6L11.5 11.6V15.3M11.5 11.6L14.8 10" stroke="#333" fill="none" stroke-width=".9"/><path d="M2 2.6V9.6" stroke="#fff" stroke-width="1"/><path d="M2.2 1.9h3.2" stroke="#fff" stroke-width=".8"/><path d="M12.6 12.5V14.3" stroke="#fff" stroke-width=".9"/></svg>
<div style="left:128px;top:399px;width:40px;height:1px;background:#dadada"></div>
<div style="left:167px;top:379px;width:1px;height:21px;background:#dadada"></div>
<svg style="left:132.5px;top:381px" width="16" height="16" viewBox="0 0 16 16"><path d="M1.5 3.5h10l3.5 8h-10z" fill="#4a9ae8" stroke="#1f64c0" stroke-width=".9" stroke-linejoin="round"/></svg>
<div style="left:1px;top:404px;width:695px;height:18px;background:linear-gradient(#f1f1f1,#e9e9e9)"></div>
<div style="left:1px;top:403px;width:695px;height:1px;background:#d7d7d7"></div>
<div style="left:50px;top:405px;width:1px;height:15px;background:#d2d2d2"></div>
<div style="left:692px;top:412px;width:2px;height:2px;background:#b4b4b4"></div>
<div style="left:689px;top:415px;width:2px;height:2px;background:#b4b4b4"></div>
<div style="left:692px;top:415px;width:2px;height:2px;background:#b4b4b4"></div>
<div style="left:686px;top:418px;width:2px;height:2px;background:#b4b4b4"></div>
<div style="left:689px;top:418px;width:2px;height:2px;background:#b4b4b4"></div>
<div style="left:692px;top:418px;width:2px;height:2px;background:#b4b4b4"></div>
<div class="t" style="left:3.5px;top:407.84px;font-size:12px;font-weight:400;color:#000;">12</div>
<div class="t" style="left:55.5px;top:407.84px;font-size:12px;font-weight:400;color:#000;">Системный администратор</div>
<div style="left:0px;top:424px;width:697px;height:348px;background:#f0f0f0"></div>
<div style="left:0px;top:424px;width:697px;height:348px;border:1px solid #9f9f9f;box-sizing:border-box;"></div>
<div style="left:1px;top:425px;width:695px;height:31px;background:#fff"></div>
<svg style="left:10px;top:432px" width="16" height="16" viewBox="0 0 16 16"><rect x="0.5" y="4.5" width="5" height="6" fill="#e4f0fb" stroke="#1c6fd1" stroke-width="1"/><rect x="5.5" y="0.5" width="8" height="14" fill="#d6e8fa" stroke="#1c6fd1" stroke-width="1"/></svg>
<div class="t" style="left:30px;top:435.49px;font-size:12.3px;font-weight:400;color:#999;transform:scaleX(0.951);transform-origin:0 0;">Изделия</div>
<div style="left:577px;top:440px;width:10px;height:1px;background:#a5a5a5"></div>
<div style="left:622px;top:435px;width:10px;height:10px;border:1px solid #7d7d7d;box-sizing:border-box;"></div>
<svg style="left:667px;top:434px" width="12" height="12" viewBox="0 0 12 12"><path d="M1 1L11 11M11 1L1 11" stroke="#7d7d7d" stroke-width="1.05" fill="none"/></svg>
<svg style="left:12px;top:465px" width="16" height="16" viewBox="0 0 16 16"><rect x="0.5" y="2.5" width="5" height="5" fill="#e4f0fb" stroke="#1c6fd1" stroke-width="1"/><rect x="4.5" y="0.5" width="6" height="11" fill="#d6e8fa" stroke="#1c6fd1" stroke-width="1"/><path d="M9.5 12.5h6M12.5 9.5v6" stroke="#137a13" stroke-width="3"/><path d="M10.3 12.5h4.4M12.5 10.3v4.4" stroke="#9be39b" stroke-width="1.1"/></svg>
<svg style="left:40px;top:465px" width="16" height="16" viewBox="0 0 16 16"><rect x="1.5" y="3.5" width="4" height="5" fill="#d8d8d8" stroke="#9a9a9a" stroke-width="1"/><rect x="5.5" y="0.5" width="5" height="11" fill="#d8d8d8" stroke="#9a9a9a" stroke-width="1"/><rect x="9" y="13" width="7" height="2" fill="#8a8a8a"/></svg>
<div style="left:64px;top:462px;width:1px;height:24px;background:#8c8c8c"></div>
<svg style="left:74px;top:465px" width="16" height="16" viewBox="0 0 16 16"><rect x="1.5" y="1.5" width="13" height="14" fill="#fff" stroke="#5a6670" stroke-width="1"/><rect x="1" y="1" width="14" height="2.2" fill="#1c6fd1"/><line x1="3" y1="7.5" x2="5" y2="7.5" stroke="#5a6670" stroke-width="1"/><rect x="6.5" y="6.5" width="6" height="2" fill="none" stroke="#5a6670" stroke-width="1"/><line x1="3" y1="11.5" x2="5" y2="11.5" stroke="#5a6670" stroke-width="1"/><rect x="6.5" y="10.5" width="6" height="2" fill="none" stroke="#5a6670" stroke-width="1"/></svg>
<svg style="left:102px;top:465px" width="16" height="16" viewBox="0 0 16 16"><rect x="0.5" y="0.5" width="5" height="2" fill="#fff" stroke="#1c6fd1" stroke-width="1"/><path d="M3 3v11.5h4.5" stroke="#1c6fd1" fill="none" stroke-width="1.2"/><path d="M3 7.5h4.5" stroke="#1c6fd1" stroke-width="1.2"/><path d="M3.5 7.5l3-2.3v4.6z" fill="#1c6fd1"/><rect x="9.5" y="6.5" width="6" height="2.5" fill="#cde3f7" stroke="#5f6a74" stroke-width="1"/><rect x="9.5" y="13.0" width="6" height="2.5" fill="#fff" stroke="#1c6fd1" stroke-width="1"/></svg>
<div style="left:126px;top:462px;width:1px;height:24px;background:#8c8c8c"></div>
<svg style="left:136px;top:465px" width="16" height="16" viewBox="0 0 16 16"><rect x="0.5" y="0.5" width="5" height="2" fill="#fff" stroke="#1c6fd1" stroke-width="1"/><path d="M3 3v11.5h5M3 8h5" stroke="#1c6fd1" fill="none" stroke-width="1.2"/><rect x="8.5" y="6.5" width="6" height="2.5" fill="#fff" stroke="#1c6fd1" stroke-width="1"/><rect x="8.5" y="13.0" width="6" height="2.5" fill="#fff" stroke="#1c6fd1" stroke-width="1"/></svg>
<svg style="left:161.0px;top:472px" width="7" height="4" viewBox="0 0 7 4"><path d="M0 0H7L3.5 4Z" fill="#1e1e1e"/></svg>
<svg style="left:177px;top:465px" width="16" height="16" viewBox="0 0 16 16"><rect x="0.5" y="4.5" width="5" height="5" fill="#d6e8fa" stroke="#1c6fd1" stroke-width="1"/><rect x="5.5" y="0.5" width="8" height="14" fill="#d6e8fa" stroke="#1c6fd1" stroke-width="1"/></svg>
<svg style="left:202.0px;top:472px" width="7" height="4" viewBox="0 0 7 4"><path d="M0 0H7L3.5 4Z" fill="#1e1e1e"/></svg>
<svg style="left:218px;top:465px" width="16" height="16" viewBox="0 0 16 16"><rect x="8.5" y="0.5" width="7" height="7" fill="#1ec81e" stroke="#1c3a8a" stroke-width="1"/><line x1="3" y1="13" x2="8.5" y2="7.5" stroke="#1c3a8a" stroke-width="1"/><rect x="0.5" y="12.5" width="3" height="3" fill="#fff" stroke="#333" stroke-width="1"/></svg>
<svg style="left:246px;top:465px" width="16" height="16" viewBox="0 0 16 16"><rect x="8.5" y="0.5" width="7" height="7" fill="#f8f200" stroke="#1c3a8a" stroke-width="1"/><line x1="3" y1="13" x2="8.5" y2="7.5" stroke="#1c3a8a" stroke-width="1"/><rect x="0.5" y="12.5" width="3" height="3" fill="#fff" stroke="#333" stroke-width="1"/></svg>
<div style="left:270px;top:462px;width:1px;height:24px;background:#8c8c8c"></div>
<svg style="left:280px;top:465px" width="16" height="16" viewBox="0 0 16 16"><path d="M1.5 10.5V4.5L2.5 1.5H4.5L5.5 4.5V10.5ZM6.5 10.5V4.5L7.5 1.5H9.5L10.5 4.5V10.5Z" fill="#fff" stroke="#222" stroke-width="1"/><rect x="5" y="5" width="2" height="2" fill="#222"/><rect x="1.5" y="6.5" width="4" height="1" fill="#222"/><rect x="6.5" y="6.5" width="4" height="1" fill="#222"/><rect x="8.5" y="9.5" width="3" height="5" fill="#d6e8fa" stroke="#1c6fd1" stroke-width="1"/><rect x="11.5" y="7.5" width="4" height="8" fill="#d6e8fa" stroke="#1c6fd1" stroke-width="1"/></svg>
<svg style="left:305.0px;top:472px" width="7" height="4" viewBox="0 0 7 4"><path d="M0 0H7L3.5 4Z" fill="#1e1e1e"/></svg>
<svg style="left:321px;top:465px" width="16" height="16" viewBox="0 0 16 16"><path d="M1 1.5H13.5L8.8 7.2V14.2A1.5 1.5 0 0 1 5.8 14.2V7.2Z" fill="#fff" stroke="#4f7db5" stroke-width="1.1" stroke-linejoin="round"/></svg>
<svg style="left:346.0px;top:472px" width="7" height="4" viewBox="0 0 7 4"><path d="M0 0H7L3.5 4Z" fill="#1e1e1e"/></svg>
<svg style="left:362px;top:465px" width="16" height="16" viewBox="0 0 16 16"><circle cx="6" cy="5" r="4" fill="#fff" stroke="#333" stroke-width="1.3"/><path d="M3 8l-2.5 3" stroke="#e8a020" stroke-width="2"/><rect x="7.5" y="9.5" width="3" height="5" fill="#d6e8fa" stroke="#1c6fd1" stroke-width="1"/><rect x="10.5" y="6.5" width="5" height="9" fill="#d6e8fa" stroke="#1c6fd1" stroke-width="1"/></svg>
<div style="left:386px;top:462px;width:1px;height:24px;background:#8c8c8c"></div>
<svg style="left:396px;top:465px" width="16" height="16" viewBox="0 0 16 16"><polygon points="0.20,8.20 4.10,1.50 11.90,1.50 15.80,8.20 11.90,14.90 4.10,14.90" fill="#1a6fc9"/><line x1="-0.80" y1="8.2" x2="16.80" y2="8.2" stroke="#fff" stroke-width="0.8"/><line x1="4.10" y1="1.50" x2="11.90" y2="14.90" stroke="#fff" stroke-width="0.8"/><line x1="11.90" y1="1.50" x2="4.10" y2="14.90" stroke="#fff" stroke-width="0.8"/><circle cx="8" cy="8.2" r="1.3" fill="#fff"/></svg>
<svg style="left:424px;top:465px" width="16" height="16" viewBox="0 0 16 16"><rect x="5.5" y="1.5" width="10" height="13" fill="#fff" stroke="#2f62a8" stroke-width="1"/><rect x="1.5" y="4.5" width="11" height="12" fill="#a9c8ea" stroke="#2f62a8"/><rect x="0.5" y="6" width="2" height="0.8" fill="#2f62a8"/><rect x="0.5" y="8" width="2" height="0.8" fill="#2f62a8"/><rect x="0.5" y="10" width="2" height="0.8" fill="#2f62a8"/><rect x="0.5" y="12" width="2" height="0.8" fill="#2f62a8"/><rect x="0.5" y="14" width="2" height="0.8" fill="#2f62a8"/></svg>
<svg style="left:452px;top:465px" width="16" height="16" viewBox="0 0 16 16"><rect x="0.5" y="1.5" width="11" height="13" fill="#fff" stroke="#1c78e0" stroke-width="1"/><rect x="2" y="3.5" width="1" height="1.2" fill="#2f5f9f"/><rect x="4" y="3.5" width="5" height="1.2" fill="#2f5f9f"/><rect x="2" y="6" width="1" height="1.2" fill="#2f5f9f"/><rect x="4" y="6" width="5" height="1.2" fill="#2f5f9f"/><rect x="2" y="8.5" width="1" height="1.2" fill="#2f5f9f"/><rect x="4" y="8.5" width="5" height="1.2" fill="#2f5f9f"/><rect x="2" y="11" width="1" height="1.2" fill="#2f5f9f"/><rect x="4" y="11" width="5" height="1.2" fill="#2f5f9f"/><rect x="2" y="13" width="1" height="1.2" fill="#2f5f9f"/><rect x="4" y="13" width="5" height="1.2" fill="#2f5f9f"/><rect x="7.5" y="10.5" width="2" height="4" fill="#eef5fc" stroke="#0f5fbf" stroke-width="1"/><rect x="9.5" y="8.5" width="5" height="8" fill="#e4eefa" stroke="#0f5fbf" stroke-width="1"/><rect x="11" y="10" width="1" height="5" fill="#cfdff3"/></svg>
<svg style="left:477.0px;top:472px" width="7" height="4" viewBox="0 0 7 4"><path d="M0 0H7L3.5 4Z" fill="#1e1e1e"/></svg>
<svg style="left:493px;top:465px" width="16" height="16" viewBox="0 0 16 16"><path d="M0.8 1.2L3 3.3L0.8 5.4M6 1.2L8.2 3.3L6 5.4M11.2 1.2L13.4 3.3L11.2 5.4" stroke="#1f5fb3" stroke-width="1.8" fill="none"/><path d="M0.5 7.5v1h5v-1M2.8 8.5v3M8.5 7.5v1h6v-1M11.5 8.5v3" stroke="#1f5fb3" fill="none" stroke-width="1"/><rect x="0.5" y="11.5" width="5" height="4" fill="#f7b060" stroke="#9a3a00" stroke-width="1"/><rect x="9.5" y="11.5" width="5" height="4" fill="#f7b060" stroke="#9a3a00" stroke-width="1"/></svg>
<div style="left:517px;top:462px;width:1px;height:24px;background:#8c8c8c"></div>
<svg style="left:527px;top:465px" width="16" height="16" viewBox="0 0 16 16"><rect x="1.5" y="2.5" width="13" height="12" fill="#fff" stroke="#5f6a74" stroke-width="1"/><rect x="1" y="2" width="14" height="2" fill="#1c6fd1"/><line x1="6.5" y1="4" x2="6.5" y2="15" stroke="#5f6a74" stroke-width="1"/><line x1="2.5" y1="6.5" x2="5" y2="6.5" stroke="#5f6a74" stroke-width="1"/><line x1="8" y1="6.5" x2="9.5" y2="6.5" stroke="#5f6a74" stroke-width="1"/><line x1="10.5" y1="6.5" x2="13.5" y2="6.5" stroke="#5f6a74" stroke-width="1"/><line x1="2.5" y1="8.5" x2="5" y2="8.5" stroke="#5f6a74" stroke-width="1"/><line x1="8" y1="8.5" x2="9.5" y2="8.5" stroke="#5f6a74" stroke-width="1"/><line x1="10.5" y1="8.5" x2="13.5" y2="8.5" stroke="#5f6a74" stroke-width="1"/><line x1="2.5" y1="10.5" x2="5" y2="10.5" stroke="#5f6a74" stroke-width="1"/><line x1="8" y1="10.5" x2="9.5" y2="10.5" stroke="#5f6a74" stroke-width="1"/><line x1="10.5" y1="10.5" x2="13.5" y2="10.5" stroke="#5f6a74" stroke-width="1"/><line x1="2.5" y1="12.5" x2="5" y2="12.5" stroke="#5f6a74" stroke-width="1"/><line x1="8" y1="12.5" x2="9.5" y2="12.5" stroke="#5f6a74" stroke-width="1"/><line x1="10.5" y1="12.5" x2="13.5" y2="12.5" stroke="#5f6a74" stroke-width="1"/></svg>
<svg style="left:555px;top:465px" width="16" height="16" viewBox="0 0 16 16"><rect x="1.5" y="1.5" width="2" height="2" fill="#fff" stroke="#1c6fd1" stroke-width="1"/><rect x="1.5" y="6.5" width="2" height="2" fill="#fff" stroke="#1c6fd1" stroke-width="1"/><rect x="1.5" y="11.5" width="2" height="2" fill="#fff" stroke="#1c6fd1" stroke-width="1"/><rect x="5.5" y="3.5" width="9" height="11" fill="#fff" stroke="#6a7480" stroke-width="1"/><rect x="5" y="3" width="10" height="2" fill="#1c6fd1"/><line x1="8.5" y1="5" x2="8.5" y2="15" stroke="#6a7480" stroke-width="1"/><line x1="11.5" y1="5" x2="11.5" y2="15" stroke="#6a7480" stroke-width="1"/></svg>
<svg style="left:583px;top:465px" width="16" height="16" viewBox="0 0 16 16"><g fill="none" stroke="#1565c0" stroke-width="1.5" stroke-linecap="round" stroke-linejoin="round"><path d="M3.4 2.8C5.5 0 10.8 -0.2 12.5 5.5V9"/><path d="M10 6.8L12.5 9.3L15 6.8"/><path d="M12.5 12.4C10.5 15.4 5 15.4 3.4 9.5V6"/><path d="M1 8.2L3.4 5.7L5.8 8.2"/></g></svg>
<svg style="left:608.0px;top:472px" width="7" height="4" viewBox="0 0 7 4"><path d="M0 0H7L3.5 4Z" fill="#1e1e1e"/></svg>
<svg style="left:282px;top:502px" width="16" height="16" viewBox="0 0 16 16"><path d="M2.5 4v10.5h4M2.5 6.5h4M2.5 10.5h4M9.5 10.5h3M9.5 14.5h3" stroke="#6b5d52" fill="none" stroke-width="1.1"/><rect x="0.6" y="0.6" width="3.8" height="2.8" rx=".6" fill="#fff" stroke="#0a78d8" stroke-width="1.2"/><rect x="6.6" y="5.6" width="2.8" height="1.8" rx=".6" fill="#fff" stroke="#0a78d8" stroke-width="1.2"/><rect x="6.6" y="9.6" width="2.8" height="1.8" rx=".6" fill="#fff" stroke="#0a78d8" stroke-width="1.2"/><rect x="12.6" y="9.6" width="2.8" height="1.8" rx=".6" fill="#fff" stroke="#0a78d8" stroke-width="1.2"/><rect x="6.6" y="13.6" width="2.8" height="1.8" rx=".6" fill="#fff" stroke="#0a78d8" stroke-width="1.2"/><rect x="12.6" y="13.6" width="2.8" height="1.8" rx=".6" fill="#fff" stroke="#0a78d8" stroke-width="1.2"/></svg>
<svg style="left:310px;top:502px" width="16" height="16" viewBox="0 0 16 16"><path d="M1 1.5H13.5L8.8 7.2V14.2A1.5 1.5 0 0 1 5.8 14.2V7.2Z" fill="#fff" stroke="#4f7db5" stroke-width="1.1" stroke-linejoin="round"/></svg>
<svg style="left:335.0px;top:508px" width="7" height="4" viewBox="0 0 7 4"><path d="M0 0H7L3.5 4Z" fill="#1e1e1e"/></svg>
<div class="t" style="left:7px;top:503.84px;font-size:12px;font-weight:700;color:#000;">Изделия</div>
<div style="left:6px;top:528px;width:260px;height:193px;border:1px solid #828790;box-sizing:border-box;background:#fff;"></div>
<div style="left:276px;top:528px;width:415px;height:218px;border:1px solid #828790;box-sizing:border-box;background:#fff;"></div>
<div style="left:248px;top:529px;width:16px;height:190px;background:#f0f0f0"></div>
<div style="left:248px;top:553px;width:16px;height:62px;background:#cdcdcd"></div>
<svg style="left:250px;top:534px" width="12" height="8" viewBox="0 0 12 8"><path d="M2.5 6l3.5-3.5l3.5 3.5" stroke="#606060" stroke-width="1.8" fill="none"/></svg>
<svg style="left:250px;top:706px" width="12" height="8" viewBox="0 0 12 8"><path d="M2.5 2l3.5 3.5l3.5-3.5" stroke="#606060" stroke-width="1.8" fill="none"/></svg>
<div style="left:61px;top:581px;width:148px;height:17px;background:#cce8ff"></div>
<div style="left:33px;top:564px;width:1px;height:156px;background:repeating-linear-gradient(#000 0 1px,transparent 1px 2px)"></div>
<div style="left:50px;top:598px;width:1px;height:44px;background:repeating-linear-gradient(#000 0 1px,transparent 1px 2px)"></div>
<div style="left:35px;top:573px;width:7px;height:1px;background:repeating-linear-gradient(90deg,#000 0 1px,transparent 1px 2px)"></div>
<div style="left:35px;top:658px;width:7px;height:1px;background:repeating-linear-gradient(90deg,#000 0 1px,transparent 1px 2px)"></div>
<div style="left:35px;top:675px;width:7px;height:1px;background:repeating-linear-gradient(90deg,#000 0 1px,transparent 1px 2px)"></div>
<div style="left:35px;top:692px;width:7px;height:1px;background:repeating-linear-gradient(90deg,#000 0 1px,transparent 1px 2px)"></div>
<div style="left:35px;top:709px;width:7px;height:1px;background:repeating-linear-gradient(90deg,#000 0 1px,transparent 1px 2px)"></div>
<div style="left:38px;top:590px;width:4px;height:1px;background:repeating-linear-gradient(90deg,#000 0 1px,transparent 1px 2px)"></div>
<div style="left:52px;top:607px;width:7px;height:1px;background:repeating-linear-gradient(90deg,#000 0 1px,transparent 1px 2px)"></div>
<div style="left:52px;top:624px;width:7px;height:1px;background:repeating-linear-gradient(90deg,#000 0 1px,transparent 1px 2px)"></div>
<div style="left:52px;top:641px;width:7px;height:1px;background:repeating-linear-gradient(90deg,#000 0 1px,transparent 1px 2px)"></div>
<div style="left:11px;top:551px;width:9px;height:9px;border:1px solid #a0a0a0;box-sizing:border-box;background:#f4f4f4;"></div>
<div style="left:13px;top:555px;width:5px;height:1px;background:#1c5fb0"></div>
<div style="left:28px;top:585px;width:9px;height:9px;border:1px solid #a0a0a0;box-sizing:border-box;background:#f4f4f4;"></div>
<div style="left:30px;top:589px;width:5px;height:1px;background:#1c5fb0"></div>
<svg style="left:25px;top:530.5px" width="16" height="16" viewBox="0 0 16 16"><rect x="0.5" y="4.5" width="3" height="6" fill="#cfcfcf" stroke="#7a7a7a"/><rect x="9.5" y="4.5" width="3.5" height="6" fill="#cfcfcf" stroke="#7a7a7a"/><rect x="13" y="5.5" width="2" height="4" fill="#cfcfcf" stroke="#7a7a7a" stroke-width=".9"/><path d="M1 6.5h2M1 8.5h2M10 6.5h2.5M10 8.5h2.5" stroke="#7a7a7a" stroke-width=".8"/><rect x="3.5" y="0.5" width="3" height="14" rx=".8" fill="#cfcfcf" stroke="#7a7a7a"/><rect x="6.5" y="0.5" width="3" height="14" rx=".8" fill="#cfcfcf" stroke="#7a7a7a"/><path d="M5 2v11M8 2v11" stroke="#f4f4f4" stroke-width="1"/></svg>
<div class="t" style="left:46px;top:534.19px;font-size:11px;font-weight:400;color:#6d6d6d;">222-237070 &quot;Кронштейн в сборе&quot;</div>
<svg style="left:25px;top:547.5px" width="16" height="16" viewBox="0 0 16 16"><rect x="0.5" y="4.5" width="3" height="6" fill="#9cc4ee" stroke="#0f4f9e"/><rect x="9.5" y="4.5" width="3.5" height="6" fill="#9cc4ee" stroke="#0f4f9e"/><rect x="13" y="5.5" width="2" height="4" fill="#9cc4ee" stroke="#0f4f9e" stroke-width=".9"/><path d="M1 6.5h2M1 8.5h2M10 6.5h2.5M10 8.5h2.5" stroke="#0f4f9e" stroke-width=".8"/><rect x="3.5" y="0.5" width="3" height="14" rx=".8" fill="#9cc4ee" stroke="#0f4f9e"/><rect x="6.5" y="0.5" width="3" height="14" rx=".8" fill="#9cc4ee" stroke="#0f4f9e"/><path d="M5 2v11M8 2v11" stroke="#f4f9ff" stroke-width="1"/></svg>
<div class="t" style="left:46px;top:551.19px;font-size:11px;font-weight:400;color:#000;">КДМ 1000.00.00.000 &quot;Шкив&quot;</div>
<svg style="left:42px;top:564.5px" width="16" height="16" viewBox="0 0 16 16"><rect x="5.5" y="3.5" width="10" height="12" fill="#fff" stroke="#4a86c8"/><rect x="7" y="5" width="7" height="9" fill="#9fc0e4"/><path d="M1 2.5l3.5-2l4 1.5v5.5l-3.5 2l-4-1.5z" fill="#5b9ae0"/><path d="M4.5 4.5l4-2.5v5.5l-3.5 2z" fill="#2f6fb8"/><path d="M1 2.5l3.5 2l4-2.5l-4-1.5z" fill="#8ec0f4"/></svg>
<div class="t" style="left:62.5px;top:568.19px;font-size:11px;font-weight:400;color:#000;">КДМ 1000.00.00.000 СБ &quot;Шкив&quot;</div>
<svg style="left:42px;top:581.5px" width="16" height="16" viewBox="0 0 16 16"><rect x="0.5" y="4.5" width="3" height="6" fill="#9cc4ee" stroke="#0f4f9e"/><rect x="9.5" y="4.5" width="3.5" height="6" fill="#9cc4ee" stroke="#0f4f9e"/><rect x="13" y="5.5" width="2" height="4" fill="#9cc4ee" stroke="#0f4f9e" stroke-width=".9"/><path d="M1 6.5h2M1 8.5h2M10 6.5h2.5M10 8.5h2.5" stroke="#0f4f9e" stroke-width=".8"/><rect x="3.5" y="0.5" width="3" height="14" rx=".8" fill="#9cc4ee" stroke="#0f4f9e"/><rect x="6.5" y="0.5" width="3" height="14" rx=".8" fill="#9cc4ee" stroke="#0f4f9e"/><path d="M5 2v11M8 2v11" stroke="#f4f9ff" stroke-width="1"/></svg>
<div class="t" style="left:62.5px;top:585.19px;font-size:11px;font-weight:400;color:#000;">КДМ 1000.00.00.010 &quot;Гайка&quot;</div>
<svg style="left:59px;top:598.5px" width="16" height="16" viewBox="0 0 16 16"><rect x="5.5" y="3.5" width="10" height="12" fill="#fff" stroke="#4a86c8"/><rect x="7" y="5" width="7" height="9" fill="#9fc0e4"/><path d="M1 2.5l3.5-2l4 1.5v5.5l-3.5 2l-4-1.5z" fill="#5b9ae0"/><path d="M4.5 4.5l4-2.5v5.5l-3.5 2z" fill="#2f6fb8"/><path d="M1 2.5l3.5 2l4-2.5l-4-1.5z" fill="#8ec0f4"/></svg>
<div class="t" style="left:79.5px;top:602.19px;font-size:11px;font-weight:400;color:#000;">КДМ 1000.00.00.010 СБ &quot;Гайка&quot;</div>
<svg style="left:60px;top:615.5px" width="16" height="16" viewBox="0 0 16 16"><polygon points="7.20,2.50 8.33,2.61 8.73,4.60 9.42,4.97 11.30,4.20 12.02,5.08 10.90,6.77 11.12,7.52 13.00,8.30 12.89,9.43 10.90,9.83 10.53,10.52 11.30,12.40 10.42,13.12 8.73,12.00 7.98,12.22 7.20,14.10 6.07,13.99 5.67,12.00 4.98,11.63 3.10,12.40 2.38,11.52 3.50,9.83 3.28,9.08 1.40,8.30 1.51,7.17 3.50,6.77 3.87,6.08 3.10,4.20 3.98,3.48 5.67,4.60 6.42,4.38" fill="#f8c21a" stroke="#b4530a" stroke-width="1" stroke-linejoin="round"/><circle cx="7.2" cy="8.3" r="1.7" fill="#fff" stroke="#b4530a" stroke-width="0.8"/></svg>
<div class="t" style="left:79.5px;top:619.19px;font-size:11px;font-weight:400;color:#000;">КДМ 1000.00.00.011 &quot;Гайка&quot;</div>
<svg style="left:60px;top:632.5px" width="16" height="16" viewBox="0 0 16 16"><polygon points="7.20,2.50 8.33,2.61 8.73,4.60 9.42,4.97 11.30,4.20 12.02,5.08 10.90,6.77 11.12,7.52 13.00,8.30 12.89,9.43 10.90,9.83 10.53,10.52 11.30,12.40 10.42,13.12 8.73,12.00 7.98,12.22 7.20,14.10 6.07,13.99 5.67,12.00 4.98,11.63 3.10,12.40 2.38,11.52 3.50,9.83 3.28,9.08 1.40,8.30 1.51,7.17 3.50,6.77 3.87,6.08 3.10,4.20 3.98,3.48 5.67,4.60 6.42,4.38" fill="#f8c21a" stroke="#b4530a" stroke-width="1" stroke-linejoin="round"/><circle cx="7.2" cy="8.3" r="1.7" fill="#fff" stroke="#b4530a" stroke-width="0.8"/></svg>
<div class="t" style="left:79.5px;top:636.19px;font-size:11px;font-weight:400;color:#000;">КДМ 1000.00.00.012 &quot;Уплотне...</div>
<svg style="left:43px;top:649.5px" width="16" height="16" viewBox="0 0 16 16"><polygon points="7.20,2.50 8.33,2.61 8.73,4.60 9.42,4.97 11.30,4.20 12.02,5.08 10.90,6.77 11.12,7.52 13.00,8.30 12.89,9.43 10.90,9.83 10.53,10.52 11.30,12.40 10.42,13.12 8.73,12.00 7.98,12.22 7.20,14.10 6.07,13.99 5.67,12.00 4.98,11.63 3.10,12.40 2.38,11.52 3.50,9.83 3.28,9.08 1.40,8.30 1.51,7.17 3.50,6.77 3.87,6.08 3.10,4.20 3.98,3.48 5.67,4.60 6.42,4.38" fill="#f8c21a" stroke="#b4530a" stroke-width="1" stroke-linejoin="round"/><circle cx="7.2" cy="8.3" r="1.7" fill="#fff" stroke="#b4530a" stroke-width="0.8"/></svg>
<div class="t" style="left:62.5px;top:653.19px;font-size:11px;font-weight:400;color:#000;">КДМ 1000.00.00.001 &quot;Вал&quot;</div>
<svg style="left:43px;top:666.5px" width="16" height="16" viewBox="0 0 16 16"><polygon points="7.20,2.50 8.33,2.61 8.73,4.60 9.42,4.97 11.30,4.20 12.02,5.08 10.90,6.77 11.12,7.52 13.00,8.30 12.89,9.43 10.90,9.83 10.53,10.52 11.30,12.40 10.42,13.12 8.73,12.00 7.98,12.22 7.20,14.10 6.07,13.99 5.67,12.00 4.98,11.63 3.10,12.40 2.38,11.52 3.50,9.83 3.28,9.08 1.40,8.30 1.51,7.17 3.50,6.77 3.87,6.08 3.10,4.20 3.98,3.48 5.67,4.60 6.42,4.38" fill="#f8c21a" stroke="#b4530a" stroke-width="1" stroke-linejoin="round"/><circle cx="7.2" cy="8.3" r="1.7" fill="#fff" stroke="#b4530a" stroke-width="0.8"/></svg>
<div class="t" style="left:62.5px;top:670.19px;font-size:11px;font-weight:400;color:#000;">КДМ 1000.00.00.002 &quot;Крышка&quot;</div>
<svg style="left:43px;top:683.5px" width="16" height="16" viewBox="0 0 16 16"><polygon points="7.20,2.50 8.33,2.61 8.73,4.60 9.42,4.97 11.30,4.20 12.02,5.08 10.90,6.77 11.12,7.52 13.00,8.30 12.89,9.43 10.90,9.83 10.53,10.52 11.30,12.40 10.42,13.12 8.73,12.00 7.98,12.22 7.20,14.10 6.07,13.99 5.67,12.00 4.98,11.63 3.10,12.40 2.38,11.52 3.50,9.83 3.28,9.08 1.40,8.30 1.51,7.17 3.50,6.77 3.87,6.08 3.10,4.20 3.98,3.48 5.67,4.60 6.42,4.38" fill="#f8c21a" stroke="#b4530a" stroke-width="1" stroke-linejoin="round"/><circle cx="7.2" cy="8.3" r="1.7" fill="#fff" stroke="#b4530a" stroke-width="0.8"/></svg>
<div class="t" style="left:62.5px;top:687.19px;font-size:11px;font-weight:400;color:#000;">КДМ 1000.00.00.003 &quot;Втулка&quot;</div>
<svg style="left:43px;top:700.5px" width="16" height="16" viewBox="0 0 16 16"><polygon points="7.20,2.50 8.33,2.61 8.73,4.60 9.42,4.97 11.30,4.20 12.02,5.08 10.90,6.77 11.12,7.52 13.00,8.30 12.89,9.43 10.90,9.83 10.53,10.52 11.30,12.40 10.42,13.12 8.73,12.00 7.98,12.22 7.20,14.10 6.07,13.99 5.67,12.00 4.98,11.63 3.10,12.40 2.38,11.52 3.50,9.83 3.28,9.08 1.40,8.30 1.51,7.17 3.50,6.77 3.87,6.08 3.10,4.20 3.98,3.48 5.67,4.60 6.42,4.38" fill="#f8c21a" stroke="#b4530a" stroke-width="1" stroke-linejoin="round"/><circle cx="7.2" cy="8.3" r="1.7" fill="#fff" stroke="#b4530a" stroke-width="0.8"/></svg>
<div class="t" style="left:62.5px;top:704.19px;font-size:11px;font-weight:400;color:#000;">КДМ 1000.00.00.004 &quot;Шайба&quot;</div>
<div style="left:320px;top:530px;width:1px;height:22px;background:#e5e5e5"></div>
<div class="t" style="left:327.5px;top:536.69px;font-size:11px;font-weight:400;color:#000;">Наименование</div>
<div style="left:411px;top:530px;width:1px;height:22px;background:#e5e5e5"></div>
<div class="t" style="left:418px;top:536.69px;font-size:11px;font-weight:400;color:#000;">Обозначение</div>
<div style="left:554px;top:530px;width:1px;height:22px;background:#e5e5e5"></div>
<div class="t" style="left:561px;top:536.69px;font-size:11px;font-weight:400;color:#000;">Количество</div>
<div style="left:625px;top:530px;width:1px;height:22px;background:#e5e5e5"></div>
<div class="t" style="left:632.5px;top:536.69px;font-size:11px;font-weight:400;color:#000;">Масса</div>
<div style="left:679px;top:530px;width:1px;height:22px;background:#e5e5e5"></div>
<svg style="left:301px;top:554px" width="16" height="16" viewBox="0 0 16 16"><rect x="5.5" y="3.5" width="10" height="12" fill="#fff" stroke="#4a86c8"/><rect x="7" y="5" width="7" height="9" fill="#9fc0e4"/><path d="M1 2.5l3.5-2l4 1.5v5.5l-3.5 2l-4-1.5z" fill="#5b9ae0"/><path d="M4.5 4.5l4-2.5v5.5l-3.5 2z" fill="#2f6fb8"/><path d="M1 2.5l3.5 2l4-2.5l-4-1.5z" fill="#8ec0f4"/></svg>
<div class="t" style="left:327.5px;top:557.69px;font-size:11px;font-weight:400;color:#000;">Гайка</div>
<div class="t" style="left:418px;top:557.69px;font-size:11px;font-weight:400;color:#000;">КДМ 1000.00.00.010 СБ</div>
<div class="t" style="left:561px;top:557.69px;font-size:11px;font-weight:400;color:#000;">0</div>
<div class="t" style="left:632.5px;top:557.69px;font-size:11px;font-weight:400;color:#000;">0,63</div>
<svg style="left:301px;top:571px" width="16" height="16" viewBox="0 0 16 16"><polygon points="7.20,2.50 8.33,2.61 8.73,4.60 9.42,4.97 11.30,4.20 12.02,5.08 10.90,6.77 11.12,7.52 13.00,8.30 12.89,9.43 10.90,9.83 10.53,10.52 11.30,12.40 10.42,13.12 8.73,12.00 7.98,12.22 7.20,14.10 6.07,13.99 5.67,12.00 4.98,11.63 3.10,12.40 2.38,11.52 3.50,9.83 3.28,9.08 1.40,8.30 1.51,7.17 3.50,6.77 3.87,6.08 3.10,4.20 3.98,3.48 5.67,4.60 6.42,4.38" fill="#f8c21a" stroke="#b4530a" stroke-width="1" stroke-linejoin="round"/><circle cx="7.2" cy="8.3" r="1.7" fill="#fff" stroke="#b4530a" stroke-width="0.8"/></svg>
<div class="t" style="left:327.5px;top:574.69px;font-size:11px;font-weight:400;color:#000;">Гайка</div>
<div class="t" style="left:418px;top:574.69px;font-size:11px;font-weight:400;color:#000;">КДМ 1000.00.00.011</div>
<div class="t" style="left:561px;top:574.69px;font-size:11px;font-weight:400;color:#000;">1</div>
<div class="t" style="left:632.5px;top:574.69px;font-size:11px;font-weight:400;color:#000;">0,62</div>
<svg style="left:301px;top:588px" width="16" height="16" viewBox="0 0 16 16"><polygon points="7.20,2.50 8.33,2.61 8.73,4.60 9.42,4.97 11.30,4.20 12.02,5.08 10.90,6.77 11.12,7.52 13.00,8.30 12.89,9.43 10.90,9.83 10.53,10.52 11.30,12.40 10.42,13.12 8.73,12.00 7.98,12.22 7.20,14.10 6.07,13.99 5.67,12.00 4.98,11.63 3.10,12.40 2.38,11.52 3.50,9.83 3.28,9.08 1.40,8.30 1.51,7.17 3.50,6.77 3.87,6.08 3.10,4.20 3.98,3.48 5.67,4.60 6.42,4.38" fill="#f8c21a" stroke="#b4530a" stroke-width="1" stroke-linejoin="round"/><circle cx="7.2" cy="8.3" r="1.7" fill="#fff" stroke="#b4530a" stroke-width="0.8"/></svg>
<div class="t" style="left:327.5px;top:591.69px;font-size:11px;font-weight:400;color:#000;">Уплотнение</div>
<div class="t" style="left:418px;top:591.69px;font-size:11px;font-weight:400;color:#000;">КДМ 1000.00.00.012</div>
<div class="t" style="left:561px;top:591.69px;font-size:11px;font-weight:400;color:#000;">1</div>
<div class="t" style="left:632.5px;top:591.69px;font-size:11px;font-weight:400;color:#000;">0,01</div>
<div style="left:6px;top:726px;width:261px;height:1px;background:#dadada"></div>
<div style="left:6px;top:726px;width:44px;height:25px;background:#fff;border-left:1px solid #dadada;border-right:1px solid #dadada;border-bottom:1px solid #dadada;box-sizing:border-box"></div>
<svg style="left:11px;top:730px" width="16" height="16" viewBox="0 0 16 16"><rect x="1.5" y="4.5" width="5" height="5" fill="#e4f0fb" stroke="#1c6fd1" stroke-width="1"/><rect x="6.5" y="1.5" width="8" height="13" fill="#d6e8fa" stroke="#1c6fd1" stroke-width="1"/></svg>
<div style="left:50px;top:748px;width:38px;height:1px;background:#dadada"></div>
<div style="left:87px;top:728px;width:1px;height:21px;background:#dadada"></div>
<svg style="left:54.5px;top:730px" width="16" height="16" viewBox="0 0 16 16"><rect x="1.5" y="3.5" width="11" height="12" fill="#fff" stroke="#333" stroke-width="1"/><line x1="3.5" y1="3.5" x2="3.5" y2="15.5" stroke="#e03030" stroke-width="1"/><path d="M7 11l7-7l1.8 1.8l-7 7l-2.3.5z" fill="#fff" stroke="#333" stroke-width=".9"/><path d="M13 5l1.8 1.8" stroke="#e8a040" stroke-width="1.5"/></svg>
<div style="left:1px;top:753px;width:695px;height:18px;background:linear-gradient(#f1f1f1,#e9e9e9)"></div>
<div style="left:1px;top:752px;width:695px;height:1px;background:#d7d7d7"></div>
<div style="left:50px;top:754px;width:1px;height:15px;background:#d2d2d2"></div>
<div style="left:300px;top:754px;width:1px;height:15px;background:#d2d2d2"></div>
<div style="left:501px;top:754px;width:1px;height:15px;background:#d2d2d2"></div>
<div style="left:692px;top:761px;width:2px;height:2px;background:#b4b4b4"></div>
<div style="left:689px;top:764px;width:2px;height:2px;background:#b4b4b4"></div>
<div style="left:692px;top:764px;width:2px;height:2px;background:#b4b4b4"></div>
<div style="left:686px;top:767px;width:2px;height:2px;background:#b4b4b4"></div>
<div style="left:689px;top:767px;width:2px;height:2px;background:#b4b4b4"></div>
<div style="left:692px;top:767px;width:2px;height:2px;background:#b4b4b4"></div>
<div class="t" style="left:3.5px;top:756.84px;font-size:12px;font-weight:400;color:#000;">3</div>
<div style="left:698px;top:0px;width:932px;height:267px;background:#f0f0f0"></div>
<div style="left:698px;top:0px;width:932px;height:267px;border:1px solid #9f9f9f;box-sizing:border-box;"></div>
<div style="left:699px;top:1px;width:930px;height:30px;background:#fff"></div>
<svg style="left:706px;top:7px" width="16" height="16" viewBox="0 0 16 16"><path d="M0.6 2.5L2 0.6H5.6L7 2.5V6L14.8 10V13.8L11.5 15.4L0.6 10.4Z" fill="#e0e0e0" stroke="#333" stroke-width="1.1" stroke-linejoin="round"/><path d="M4.5 7.6L7 6M4.5 7.6L11.5 11.6V15.3M11.5 11.6L14.8 10" stroke="#333" fill="none" stroke-width=".9"/><path d="M2 2.6V9.6" stroke="#fff" stroke-width="1"/><path d="M2.2 1.9h3.2" stroke="#fff" stroke-width=".8"/><path d="M12.6 12.5V14.3" stroke="#fff" stroke-width=".9"/></svg>
<div class="t" style="left:728px;top:10.49px;font-size:12.3px;font-weight:400;color:#999;transform:scaleX(0.951);transform-origin:0 0;">Заготовка и вспомогательные материалы на изделие  КДМ 1000.00.00.010 &quot;Гайка&quot;</div>
<div style="left:1510px;top:15px;width:10px;height:1px;background:#a5a5a5"></div>
<div style="left:1555px;top:10px;width:10px;height:10px;border:1px solid #7d7d7d;box-sizing:border-box;"></div>
<svg style="left:1600px;top:9px" width="12" height="12" viewBox="0 0 12 12"><path d="M1 1L11 11M11 1L1 11" stroke="#7d7d7d" stroke-width="1.05" fill="none"/></svg>
<svg style="left:710px;top:41px" width="16" height="16" viewBox="0 0 16 16"><path d="M0.6 2.5L2 0.6H5.6L7 2.5V6L14.8 10V13.8L11.5 15.4L0.6 10.4Z" fill="#e0e0e0" stroke="#333" stroke-width="1.1" stroke-linejoin="round"/><path d="M4.5 7.6L7 6M4.5 7.6L11.5 11.6V15.3M11.5 11.6L14.8 10" stroke="#333" fill="none" stroke-width=".9"/><path d="M2 2.6V9.6" stroke="#fff" stroke-width="1"/><path d="M2.2 1.9h3.2" stroke="#fff" stroke-width=".8"/><path d="M12.6 12.5V14.3" stroke="#fff" stroke-width=".9"/></svg>
<svg style="left:738px;top:41px" width="16" height="16" viewBox="0 0 16 16"><path d="M0.6 2.5L2 0.6H5.6L7 2.5V6L14.8 10V13.8L11.5 15.4L0.6 10.4Z" fill="#e0e0e0" stroke="#333" stroke-width="1.1" stroke-linejoin="round"/><path d="M4.5 7.6L7 6M4.5 7.6L11.5 11.6V15.3M11.5 11.6L14.8 10" stroke="#333" fill="none" stroke-width=".9"/><path d="M2 2.6V9.6" stroke="#fff" stroke-width="1"/><path d="M2.2 1.9h3.2" stroke="#fff" stroke-width=".8"/><path d="M12.6 12.5V14.3" stroke="#fff" stroke-width=".9"/><rect x="10.5" y="0" width="2.4" height="2.4" fill="#1c6fd1"/><rect x="10.5" y="3" width="2.4" height="2.4" fill="#1c6fd1"/><rect x="13.5" y="0" width="2.4" height="2.4" fill="#1c6fd1"/><rect x="13.5" y="3" width="2.4" height="2.4" fill="#1c6fd1"/></svg>
<svg style="left:766px;top:41px" width="16" height="16" viewBox="0 0 16 16"><polygon points="13.40,6.80 13.27,8.09 11.05,8.56 10.62,9.36 11.47,11.47 10.47,12.29 8.56,11.05 7.70,11.31 6.80,13.40 5.51,13.27 5.04,11.05 4.24,10.62 2.13,11.47 1.31,10.47 2.55,8.56 2.29,7.70 0.20,6.80 0.33,5.51 2.55,5.04 2.98,4.24 2.13,2.13 3.13,1.31 5.04,2.55 5.90,2.29 6.80,0.20 8.09,0.33 8.56,2.55 9.36,2.98 11.47,2.13 12.29,3.13 11.05,5.04 11.31,5.90" fill="#f5cc1a" stroke="#9a6a00" stroke-width="0.9" stroke-linejoin="round"/><circle cx="6.8" cy="6.8" r="1.8" fill="#fff" stroke="#9a6a00" stroke-width="0.7"/><path d="M9 10.5h3v-2l3.5 3l-3.5 3v-2h-3z" fill="#8ec4f4" stroke="#1c6fd1" stroke-width=".9"/></svg>
<svg style="left:791.0px;top:47px" width="7" height="4" viewBox="0 0 7 4"><path d="M0 0H7L3.5 4Z" fill="#1e1e1e"/></svg>
<svg style="left:807px;top:41px" width="16" height="16" viewBox="0 0 16 16"><rect x="0.5" y="0.5" width="13" height="15" fill="#cfe4fa" stroke="#1c6fd1" stroke-width="1"/><circle cx="8" cy="7" r="4" fill="#fff" stroke="#333" stroke-width="1.3"/><path d="M5 10l-3.5 4" stroke="#e8a020" stroke-width="2"/></svg>
<svg style="left:835px;top:41px" width="16" height="16" viewBox="0 0 16 16"><path d="M2.5 13.5l1-3.5l8-8l2.5 2.5l-8 8z" fill="#bdbdbd" stroke="#7d7d7d" stroke-width="0.9"/><path d="M11.5 2l2.5 2.5l1-1a1.2 1.2 0 0 0 0-1.6l-.9-.9a1.2 1.2 0 0 0-1.6 0z" fill="#8d8d8d"/></svg>
<svg style="left:863px;top:41px" width="16" height="16" viewBox="0 0 16 16"><path d="M1.5 0.5h6l3 3v10h-9z" fill="#dadada" stroke="#9a9a9a"/><path d="M7.5 0.5v3h3" fill="none" stroke="#9a9a9a"/><circle cx="11.5" cy="11.5" r="3.8" fill="#ececec" stroke="#8a8a8a" stroke-width="1.3"/><path d="M9 14l5-5" stroke="#8a8a8a" stroke-width="1.3"/></svg>
<svg style="left:891px;top:41px" width="16" height="16" viewBox="0 0 16 16"><path d="M1.5 1.5l13 13M14.5 1.5l-13 13" stroke="#6f6f6f" stroke-width="1.5"/></svg>
<div style="left:915px;top:37px;width:1px;height:24px;background:#8c8c8c"></div>
<svg style="left:925px;top:41px" width="16" height="16" viewBox="0 0 16 16"><rect x="0.5" y="0.5" width="5" height="5" fill="#d4d4d4" stroke="#a8a8a8" stroke-width="1"/><path d="M6 3h2.5v11h3M8.5 8.5h3" stroke="#9a9a9a" fill="none"/><rect x="11.5" y="2.5" width="3" height="3" fill="#e6e6e6" stroke="#9a9a9a" stroke-width="1"/><rect x="11.5" y="7.5" width="3" height="3" fill="#e6e6e6" stroke="#9a9a9a" stroke-width="1"/><rect x="11.5" y="12.5" width="3" height="3" fill="#e6e6e6" stroke="#9a9a9a" stroke-width="1"/></svg>
<svg style="left:953px;top:41px" width="16" height="16" viewBox="0 0 16 16"><rect x="1.5" y="1.5" width="13" height="14" fill="#dedede" stroke="#a0a0a0" stroke-width="1"/><path d="M3 4.5l1.5 1.5l2.5-3" stroke="#8a8a8a" fill="none"/><rect x="7" y="5" width="6" height="1.6" fill="#a0a0a0"/><rect x="7" y="8" width="6" height="1.6" fill="#a0a0a0"/><rect x="7" y="11" width="6" height="1.6" fill="#a0a0a0"/></svg>
<div style="left:977px;top:37px;width:1px;height:24px;background:#8c8c8c"></div>
<svg style="left:987px;top:41px" width="16" height="16" viewBox="0 0 16 16"><rect x="0.5" y="0.5" width="9" height="14" fill="#e8e8e8" stroke="#9a9a9a" stroke-width="1"/><rect x="2.5" y="2.5" width="5" height="4" fill="#d8d8d8" stroke="#7a7a7a" stroke-width="1"/><rect x="2.5" y="8.5" width="5" height="4" fill="#d8d8d8" stroke="#7a7a7a" stroke-width="1"/><path d="M9.0 12.0h3.3v-2.2l3.4 3.2l-3.4 3.2v-2.2h-3.3z" fill="#dcdcdc" stroke="#9a9a9a" stroke-width="1" stroke-linejoin="miter"/></svg>
<svg style="left:1015px;top:41px" width="16" height="16" viewBox="0 0 16 16"><path d="M1.5 0.5h6l3 3v10h-9z" fill="#dadada" stroke="#a0a0a0"/><path d="M7.5 0.5v3h3" fill="none" stroke="#a0a0a0"/><circle cx="11.5" cy="11.5" r="4.3" fill="#6f6f6f"/><path d="M9.3 11.5l1.6 1.6l2.8-2.8" stroke="#fff" stroke-width="1.4" fill="none"/></svg>
<svg style="left:1043px;top:41px" width="16" height="16" viewBox="0 0 16 16"><circle cx="8" cy="8" r="7.5" fill="#8c8c8c"/><path d="M6.8 3h2.4l-.5 6.5h-1.4z" fill="#5a5a5a"/><circle cx="8" cy="11.8" r="1.2" fill="#5a5a5a"/></svg>
<div style="left:1067px;top:37px;width:1px;height:24px;background:#8c8c8c"></div>
<svg style="left:1077px;top:41px" width="16" height="16" viewBox="0 0 16 16"><rect x="0.5" y="9.5" width="6" height="6" fill="#e4e4e4" stroke="#9a9a9a" stroke-width="1"/><path d="M2 14l3-3M3 11h2v2" stroke="#6a6a6a" fill="none"/><rect x="7.5" y="0.5" width="8" height="8" fill="#d8d8d8" stroke="#9a9a9a" stroke-width="1"/><rect x="5.5" y="3.5" width="3" height="4" fill="#e8e8e8" stroke="#9a9a9a" stroke-width="1"/></svg>
<svg style="left:1105px;top:41px" width="16" height="16" viewBox="0 0 16 16"><rect x="0.5" y="1.5" width="3" height="2" fill="#d0d0d0" stroke="#8a8a8a" stroke-width="1"/><rect x="11.5" y="1.5" width="4" height="3" fill="#d0d0d0" stroke="#8a8a8a" stroke-width="1"/><path d="M4 2.5h6M13.5 5v6M6 13h4" stroke="#8a8a8a" fill="none"/><rect x="11.5" y="11.5" width="4" height="3" fill="#d0d0d0" stroke="#8a8a8a" stroke-width="1"/><rect x="0.5" y="9.5" width="6" height="6" fill="#e4e4e4" stroke="#9a9a9a" stroke-width="1"/><path d="M2 14l3-3M3 11h2v2" stroke="#6a6a6a" fill="none"/></svg>
<div style="left:1129px;top:37px;width:1px;height:24px;background:#8c8c8c"></div>
<svg style="left:1139px;top:41px" width="16" height="16" viewBox="0 0 16 16"><path d="M2.5 4v10.5h4M2.5 6.5h4M2.5 10.5h4M9.5 10.5h3M9.5 14.5h3" stroke="#6b5d52" fill="none" stroke-width="1.1"/><rect x="0.6" y="0.6" width="3.8" height="2.8" rx=".6" fill="#fff" stroke="#0a78d8" stroke-width="1.2"/><rect x="6.6" y="5.6" width="2.8" height="1.8" rx=".6" fill="#fff" stroke="#0a78d8" stroke-width="1.2"/><rect x="6.6" y="9.6" width="2.8" height="1.8" rx=".6" fill="#fff" stroke="#0a78d8" stroke-width="1.2"/><rect x="12.6" y="9.6" width="2.8" height="1.8" rx=".6" fill="#fff" stroke="#0a78d8" stroke-width="1.2"/><rect x="6.6" y="13.6" width="2.8" height="1.8" rx=".6" fill="#fff" stroke="#0a78d8" stroke-width="1.2"/><rect x="12.6" y="13.6" width="2.8" height="1.8" rx=".6" fill="#fff" stroke="#0a78d8" stroke-width="1.2"/></svg>
<svg style="left:1164.0px;top:47px" width="7" height="4" viewBox="0 0 7 4"><path d="M0 0H7L3.5 4Z" fill="#1e1e1e"/></svg>
<svg style="left:1180px;top:41px" width="16" height="16" viewBox="0 0 16 16"><path d="M1 1.5H13.5L8.8 7.2V14.2A1.5 1.5 0 0 1 5.8 14.2V7.2Z" fill="#fff" stroke="#4f7db5" stroke-width="1.1" stroke-linejoin="round"/></svg>
<svg style="left:1205.0px;top:47px" width="7" height="4" viewBox="0 0 7 4"><path d="M0 0H7L3.5 4Z" fill="#1e1e1e"/></svg>
<div style="left:1215px;top:35px;width:28px;height:27px;border:1px solid #99d1ff;box-sizing:border-box;background:#cce8ff;"></div>
<svg style="left:1221px;top:41px" width="16" height="16" viewBox="0 0 16 16"><rect x="1.6" y="0.6" width="4.8" height="3.8" fill="#fff" stroke="#1c6fd1" stroke-width="1.2"/><rect x="1.6" y="6.1" width="4.8" height="3.8" fill="#fff" stroke="#1c6fd1" stroke-width="1.2"/><rect x="1.6" y="11.6" width="4.8" height="3.8" fill="#fff" stroke="#1c6fd1" stroke-width="1.2"/><path d="M8.5 0.5V15" stroke="#555" stroke-width="1"/><path d="M14 11V5.5H11" stroke="#1c6fd1" fill="none" stroke-width="1.2"/><path d="M11.5 3.3L9.2 5.5L11.5 7.7Z" fill="#1c6fd1"/><rect x="10.5" y="11.5" width="5" height="4" fill="#e8e8e8" stroke="#6a6a6a"/></svg>
<div style="left:1245px;top:37px;width:1px;height:24px;background:#8c8c8c"></div>
<svg style="left:1255px;top:41px" width="16" height="16" viewBox="0 0 16 16"><path d="M4 0h7l-3.5 3z" fill="#9a9a9a"/><rect x="1.5" y="3.5" width="13" height="11" fill="#e6e6e6" stroke="#9a9a9a" stroke-width="1"/><line x1="1" y1="6.5" x2="15" y2="6.5" stroke="#b0b0b0" stroke-width="1"/><line x1="1" y1="9.5" x2="15" y2="9.5" stroke="#b0b0b0" stroke-width="1"/><line x1="1" y1="12.5" x2="15" y2="12.5" stroke="#b0b0b0" stroke-width="1"/><line x1="5.5" y1="3" x2="5.5" y2="15" stroke="#b0b0b0" stroke-width="1"/></svg>
<svg style="left:1280.0px;top:47px" width="7" height="4" viewBox="0 0 7 4"><path d="M0 0H7L3.5 4Z" fill="#8a8a8a"/></svg>
<svg style="left:1296px;top:41px" width="16" height="16" viewBox="0 0 16 16"><path d="M4 0h7l-3.5 3.5z" fill="#2cc42c"/><rect x="1.5" y="3.5" width="13" height="12" fill="#fff" stroke="#333" stroke-width="1"/><rect x="2" y="7" width="12" height="8" fill="#3a8ad8"/><line x1="2" y1="9.5" x2="14" y2="9.5" stroke="#fff" stroke-width="1"/><line x1="2" y1="12.5" x2="14" y2="12.5" stroke="#fff" stroke-width="1"/><line x1="6.5" y1="7" x2="6.5" y2="15" stroke="#fff" stroke-width="1"/></svg>
<svg style="left:1321.0px;top:47px" width="7" height="4" viewBox="0 0 7 4"><path d="M0 0H7L3.5 4Z" fill="#1e1e1e"/></svg>
<div style="left:1333px;top:37px;width:1px;height:24px;background:#8c8c8c"></div>
<svg style="left:1343px;top:41px" width="16" height="16" viewBox="0 0 16 16"><rect x="1.5" y="1.5" width="2" height="2" fill="#fff" stroke="#1c6fd1" stroke-width="1"/><rect x="1.5" y="6.5" width="2" height="2" fill="#fff" stroke="#1c6fd1" stroke-width="1"/><rect x="1.5" y="11.5" width="2" height="2" fill="#fff" stroke="#1c6fd1" stroke-width="1"/><rect x="5.5" y="3.5" width="9" height="11" fill="#fff" stroke="#6a7480" stroke-width="1"/><rect x="5" y="3" width="10" height="2" fill="#1c6fd1"/><line x1="8.5" y1="5" x2="8.5" y2="15" stroke="#6a7480" stroke-width="1"/><line x1="11.5" y1="5" x2="11.5" y2="15" stroke="#6a7480" stroke-width="1"/></svg>
<svg style="left:1371px;top:41px" width="16" height="16" viewBox="0 0 16 16"><g fill="none" stroke="#1565c0" stroke-width="1.5" stroke-linecap="round" stroke-linejoin="round"><path d="M3.4 2.8C5.5 0 10.8 -0.2 12.5 5.5V9"/><path d="M10 6.8L12.5 9.3L15 6.8"/><path d="M12.5 12.4C10.5 15.4 5 15.4 3.4 9.5V6"/><path d="M1 8.2L3.4 5.7L5.8 8.2"/></g></svg>
<svg style="left:1396.0px;top:47px" width="7" height="4" viewBox="0 0 7 4"><path d="M0 0H7L3.5 4Z" fill="#1e1e1e"/></svg>
<div style="left:704px;top:66px;width:920px;height:150px;border:1px solid #828790;box-sizing:border-box;background:#fff;"></div>
<div class="t" style="left:712.5px;top:75.19px;font-size:11px;font-weight:400;color:#000;">Обозначение детали</div>
<div style="left:875px;top:68px;width:1px;height:22px;background:#e5e5e5"></div>
<div class="t" style="left:881.5px;top:75.19px;font-size:11px;font-weight:400;color:#000;">Сортамент заготовки</div>
<div style="left:1164px;top:68px;width:1px;height:22px;background:#e5e5e5"></div>
<div class="t" style="left:1171px;top:75.19px;font-size:11px;font-weight:400;color:#000;">Норма расхода ...</div>
<div style="left:1270px;top:68px;width:1px;height:22px;background:#e5e5e5"></div>
<div class="t" style="left:1277.5px;top:75.19px;font-size:11px;font-weight:400;color:#000;">Масса заготовки</div>
<div style="left:1373px;top:68px;width:1px;height:22px;background:#e5e5e5"></div>
<div class="t" style="left:1380.5px;top:75.19px;font-size:11px;font-weight:400;color:#000;">Вид заготовки</div>
<div style="left:1465px;top:68px;width:1px;height:22px;background:#e5e5e5"></div>
<div class="t" style="left:1472px;top:75.19px;font-size:11px;font-weight:400;color:#000;">Номер варианта заготовки</div>
<div style="left:1619px;top:68px;width:1px;height:22px;background:#e5e5e5"></div>
<svg style="left:729px;top:91.5px" width="16" height="16" viewBox="0 0 16 16"><path d="M0.6 2.5L2 0.6H5.6L7 2.5V6L14.8 10V13.8L11.5 15.4L0.6 10.4Z" fill="#e0e0e0" stroke="#333" stroke-width="1.1" stroke-linejoin="round"/><path d="M4.5 7.6L7 6M4.5 7.6L11.5 11.6V15.3M11.5 11.6L14.8 10" stroke="#333" fill="none" stroke-width=".9"/><path d="M2 2.6V9.6" stroke="#fff" stroke-width="1"/><path d="M2.2 1.9h3.2" stroke="#fff" stroke-width=".8"/><path d="M12.6 12.5V14.3" stroke="#fff" stroke-width=".9"/></svg>
<div class="t" style="left:747.5px;top:95.69px;font-size:11px;font-weight:400;color:#008000;">КДМ 1000.00.00.011</div>
<div class="t" style="left:881.5px;top:95.69px;font-size:11px;font-weight:400;color:#008000;">Круг 80 ГОСТ 2590-2006/40ХН ГОСТ 4543-71</div>
<div class="t" style="left:1171px;top:95.69px;font-size:11px;font-weight:400;color:#008000;">0,57</div>
<div class="t" style="left:1277.5px;top:95.69px;font-size:11px;font-weight:400;color:#008000;">1,22</div>
<div class="t" style="left:1380.5px;top:95.69px;font-size:11px;font-weight:400;color:#008000;">Прокат</div>
<div class="t" style="left:1472px;top:95.69px;font-size:11px;font-weight:400;color:#008000;">1</div>
<svg style="left:729px;top:108.5px" width="16" height="16" viewBox="0 0 16 16"><path d="M0.6 2.5L2 0.6H5.6L7 2.5V6L14.8 10V13.8L11.5 15.4L0.6 10.4Z" fill="#e0e0e0" stroke="#333" stroke-width="1.1" stroke-linejoin="round"/><path d="M4.5 7.6L7 6M4.5 7.6L11.5 11.6V15.3M11.5 11.6L14.8 10" stroke="#333" fill="none" stroke-width=".9"/><path d="M2 2.6V9.6" stroke="#fff" stroke-width="1"/><path d="M2.2 1.9h3.2" stroke="#fff" stroke-width=".8"/><path d="M12.6 12.5V14.3" stroke="#fff" stroke-width=".9"/></svg>
<div class="t" style="left:747.5px;top:111.84px;font-size:12px;font-weight:700;color:#000;letter-spacing:0.42px;">КДМ 1000.00.00.011</div>
<div class="t" style="left:881.5px;top:111.84px;font-size:12px;font-weight:700;color:#000;letter-spacing:0.289px;">Круг  75-В ГОСТ 2590-88/ 40Х-1 ГОСТ 4543-71</div>
<div class="t" style="left:1171px;top:111.84px;font-size:12px;font-weight:700;color:#000;letter-spacing:0.087px;">0,41</div>
<div class="t" style="left:1277.5px;top:111.84px;font-size:12px;font-weight:700;color:#000;letter-spacing:0.487px;">1,08</div>
<div class="t" style="left:1380.5px;top:111.84px;font-size:12px;font-weight:700;color:#000;letter-spacing:0.444px;">Прокат</div>
<div class="t" style="left:1472px;top:111.84px;font-size:12px;font-weight:700;color:#000;"></div>
<svg style="left:729px;top:125.5px" width="16" height="16" viewBox="0 0 16 16"><path d="M0.6 2.5L2 0.6H5.6L7 2.5V6L14.8 10V13.8L11.5 15.4L0.6 10.4Z" fill="#e0e0e0" stroke="#333" stroke-width="1.1" stroke-linejoin="round"/><path d="M4.5 7.6L7 6M4.5 7.6L11.5 11.6V15.3M11.5 11.6L14.8 10" stroke="#333" fill="none" stroke-width=".9"/><path d="M2 2.6V9.6" stroke="#fff" stroke-width="1"/><path d="M2.2 1.9h3.2" stroke="#fff" stroke-width=".8"/><path d="M12.6 12.5V14.3" stroke="#fff" stroke-width=".9"/></svg>
<div class="t" style="left:747.5px;top:129.69px;font-size:11px;font-weight:400;color:#000;">КДМ 1000.00.00.010</div>
<div class="t" style="left:881.5px;top:129.69px;font-size:11px;font-weight:400;color:#000;">Шестигранник 40 ГОСТ 2879-2006/40ХН ГОСТ 4543-...</div>
<div class="t" style="left:1171px;top:129.69px;font-size:11px;font-weight:400;color:#000;">0,5</div>
<div class="t" style="left:1277.5px;top:129.69px;font-size:11px;font-weight:400;color:#000;">0,34</div>
<div class="t" style="left:1380.5px;top:129.69px;font-size:11px;font-weight:400;color:#000;">Прокат</div>
<div class="t" style="left:1472px;top:129.69px;font-size:11px;font-weight:400;color:#000;">1</div>
<div style="left:704px;top:221px;width:919px;height:1px;background:#dadada"></div>
<div style="left:704px;top:221px;width:43px;height:25px;background:#fff;border-left:1px solid #dadada;border-right:1px solid #dadada;border-bottom:1px solid #dadada;box-sizing:border-box"></div>
<svg style="left:709px;top:225px" width="16" height="16" viewBox="0 0 16 16"><path d="M0.6 2.5L2 0.6H5.6L7 2.5V6L14.8 10V13.8L11.5 15.4L0.6 10.4Z" fill="#e0e0e0" stroke="#333" stroke-width="1.1" stroke-linejoin="round"/><path d="M4.5 7.6L7 6M4.5 7.6L11.5 11.6V15.3M11.5 11.6L14.8 10" stroke="#333" fill="none" stroke-width=".9"/><path d="M2 2.6V9.6" stroke="#fff" stroke-width="1"/><path d="M2.2 1.9h3.2" stroke="#fff" stroke-width=".8"/><path d="M12.6 12.5V14.3" stroke="#fff" stroke-width=".9"/></svg>
<div style="left:747px;top:243px;width:39px;height:1px;background:#dadada"></div>
<div style="left:785px;top:223px;width:1px;height:21px;background:#dadada"></div>
<svg style="left:751.5px;top:225px" width="16" height="16" viewBox="0 0 16 16"><path d="M1.5 3.5h10l3.5 8h-10z" fill="#4a9ae8" stroke="#1f64c0" stroke-width=".9" stroke-linejoin="round"/></svg>
<div style="left:699px;top:248px;width:930px;height:18px;background:linear-gradient(#f1f1f1,#e9e9e9)"></div>
<div style="left:699px;top:247px;width:930px;height:1px;background:#d7d7d7"></div>
<div style="left:748px;top:249px;width:1px;height:15px;background:#d2d2d2"></div>
<div style="left:998px;top:249px;width:1px;height:15px;background:#d2d2d2"></div>
<div style="left:1198px;top:249px;width:1px;height:15px;background:#d2d2d2"></div>
<div style="left:1398px;top:249px;width:1px;height:15px;background:#d2d2d2"></div>
<div style="left:1625px;top:256px;width:2px;height:2px;background:#b4b4b4"></div>
<div style="left:1622px;top:259px;width:2px;height:2px;background:#b4b4b4"></div>
<div style="left:1625px;top:259px;width:2px;height:2px;background:#b4b4b4"></div>
<div style="left:1619px;top:262px;width:2px;height:2px;background:#b4b4b4"></div>
<div style="left:1622px;top:262px;width:2px;height:2px;background:#b4b4b4"></div>
<div style="left:1625px;top:262px;width:2px;height:2px;background:#b4b4b4"></div>
<div class="t" style="left:701px;top:251.84px;font-size:12px;font-weight:400;color:#000;">3</div>
<div style="left:698px;top:268px;width:932px;height:258px;background:#f0f0f0"></div>
<div style="left:698px;top:268px;width:932px;height:258px;border:1px solid #9f9f9f;box-sizing:border-box;"></div>
<div style="left:699px;top:269px;width:930px;height:30px;background:#fff"></div>
<svg style="left:706px;top:275px" width="16" height="16" viewBox="0 0 16 16"><rect x="6.5" y="3.5" width="9.5" height="12" fill="#e6f1fc"/><path d="M12.5 3.5H16.3V15.3H6.6V11.3" fill="none" stroke="#1c78e0" stroke-width="1.2"/><rect x="1.5" y="2.5" width="4" height="5" fill="#f4f4f4" stroke="#555"/><rect x="5.5" y="0.5" width="5" height="9" fill="#eeeeee" stroke="#555"/></svg>
<div class="t" style="left:728px;top:278.49px;font-size:12.3px;font-weight:400;color:#999;transform:scaleX(0.951);transform-origin:0 0;">Документы на изделие КДМ 1000.00.00.010 &quot;Гайка&quot;</div>
<div style="left:1510px;top:283px;width:10px;height:1px;background:#a5a5a5"></div>
<div style="left:1555px;top:278px;width:10px;height:10px;border:1px solid #7d7d7d;box-sizing:border-box;"></div>
<svg style="left:1600px;top:277px" width="12" height="12" viewBox="0 0 12 12"><path d="M1 1L11 11M11 1L1 11" stroke="#7d7d7d" stroke-width="1.05" fill="none"/></svg>
<svg style="left:705px;top:309px" width="16" height="16" viewBox="0 0 16 16"><rect x="1.5" y="1.5" width="13" height="14" fill="#dcdcdc" stroke="#8c8c8c" stroke-width="1"/><rect x="1" y="1" width="14" height="2.2" fill="#9a9a9a"/><line x1="3" y1="7.5" x2="5" y2="7.5" stroke="#8c8c8c" stroke-width="1"/><rect x="6.5" y="6.5" width="6" height="2" fill="none" stroke="#8c8c8c" stroke-width="1"/><line x1="3" y1="11.5" x2="5" y2="11.5" stroke="#8c8c8c" stroke-width="1"/><rect x="6.5" y="10.5" width="6" height="2" fill="none" stroke="#8c8c8c" stroke-width="1"/></svg>
<svg style="left:733px;top:309px" width="16" height="16" viewBox="0 0 16 16"><rect x="1.5" y="1.5" width="13" height="14" fill="#dcdcdc" stroke="#8c8c8c" stroke-width="1"/><rect x="1" y="1" width="14" height="2.2" fill="#9a9a9a"/><line x1="3" y1="7" x2="4.5" y2="7" stroke="#8c8c8c" stroke-width="1"/><line x1="3" y1="10" x2="4.5" y2="10" stroke="#8c8c8c" stroke-width="1"/><path d="M6.5 5h3.6c1.6 0 2.4.8 2.4 1.9c0 .8-.5 1.3-1.1 1.5c.8.2 1.4.8 1.4 1.7c0 1.3-1 2.1-2.6 2.1h-3.7zM8.3 6.4v2h1.5c.6 0 .9-.4.9-1s-.3-1-.9-1zM8.3 9.7v2.1h1.7c.7 0 1-.4 1-1.05s-.3-1.05-1-1.05z" fill="#7a7a7a"/></svg>
<svg style="left:761px;top:309px" width="16" height="16" viewBox="0 0 16 16"><rect x="1.5" y="0.5" width="13" height="14" fill="#dadada" stroke="#a5a5a5" stroke-width="1"/><circle cx="9" cy="6.5" r="3.5" fill="#e8e8e8" stroke="#8a8a8a" stroke-width="1.2"/><path d="M6.5 9l-4.5 4.5" stroke="#8a8a8a" stroke-width="2"/></svg>
<svg style="left:789px;top:309px" width="16" height="16" viewBox="0 0 16 16"><path d="M1.5 1.5h5v4h3v6h-8z" fill="#d8d8d8" stroke="#8a8a8a"/><circle cx="10" cy="10" r="3" fill="#eee" stroke="#777" stroke-width="1.3"/><path d="M12 12l3 3" stroke="#777" stroke-width="1.6"/></svg>
<svg style="left:817px;top:309px" width="16" height="16" viewBox="0 0 16 16"><path d="M2.5 13.5l1-3.5l8-8l2.5 2.5l-8 8z" fill="#bdbdbd" stroke="#7d7d7d" stroke-width="0.9"/><path d="M11.5 2l2.5 2.5l1-1a1.2 1.2 0 0 0 0-1.6l-.9-.9a1.2 1.2 0 0 0-1.6 0z" fill="#8d8d8d"/></svg>
<svg style="left:845px;top:309px" width="16" height="16" viewBox="0 0 16 16"><circle cx="4" cy="4" r="3.3" fill="#fff" stroke="#8a8a8a"/><circle cx="4" cy="12" r="3.3" fill="#fff" stroke="#8a8a8a"/><path d="M1 4h6M4 1v6M1 12h6M4 9v6" stroke="#8a8a8a" stroke-width=".7"/><path d="M9 1.5l2.5 2.5l-2.5 2.5M12 1.5l2.5 2.5l-2.5 2.5M9 9.5l2.5 2.5l-2.5 2.5M12 9.5l2.5 2.5l-2.5 2.5" stroke="#8a8a8a" stroke-width="1.3" fill="none"/></svg>
<div style="left:869px;top:305px;width:1px;height:24px;background:#8c8c8c"></div>
<svg style="left:879px;top:309px" width="16" height="16" viewBox="0 0 16 16"><rect x="6.5" y="0.5" width="9" height="9" fill="#e0e0e0" stroke="#8a8a8a" stroke-width="1"/><rect x="4.5" y="2.5" width="9" height="9" fill="#e0e0e0" stroke="#8a8a8a" stroke-width="1"/><rect x="1.5" y="5.5" width="9" height="10" fill="#dcdcdc" stroke="#8a8a8a" stroke-width="1"/><rect x="12" y="0" width="3" height="3" fill="#6a6a6a"/><rect x="9" y="5" width="2" height="2" fill="#6a6a6a"/></svg>
<svg style="left:907px;top:309px" width="16" height="16" viewBox="0 0 16 16"><rect x="0.5" y="0.5" width="5" height="5" fill="#d4d4d4" stroke="#a8a8a8" stroke-width="1"/><path d="M6 3h2.5v11h3M8.5 8.5h3" stroke="#9a9a9a" fill="none"/><rect x="11.5" y="2.5" width="3" height="3" fill="#e6e6e6" stroke="#9a9a9a" stroke-width="1"/><rect x="11.5" y="7.5" width="3" height="3" fill="#e6e6e6" stroke="#9a9a9a" stroke-width="1"/><rect x="11.5" y="12.5" width="3" height="3" fill="#e6e6e6" stroke="#9a9a9a" stroke-width="1"/></svg>
<svg style="left:935px;top:309px" width="16" height="16" viewBox="0 0 16 16"><rect x="1.5" y="1.5" width="13" height="14" fill="#dedede" stroke="#8c8c8c" stroke-width="1"/><path d="M3 4.5l1.5 1.5l2.5-3" stroke="#777" fill="none"/><rect x="7" y="5" width="6" height="1.6" fill="#8a8a8a"/><rect x="7" y="8" width="6" height="1.6" fill="#8a8a8a"/><rect x="7" y="11" width="6" height="1.6" fill="#8a8a8a"/></svg>
<svg style="left:963px;top:309px" width="16" height="16" viewBox="0 0 16 16"><rect x="1.5" y="1.5" width="13" height="14" fill="#dedede" stroke="#8c8c8c" stroke-width="1"/><path d="M3 4.5l1.5 1.5l2.5-3" stroke="#777" fill="none"/><rect x="7" y="5" width="6" height="1.6" fill="#8a8a8a"/><rect x="7" y="8" width="6" height="1.6" fill="#8a8a8a"/><rect x="7" y="11" width="6" height="1.6" fill="#8a8a8a"/></svg>
<div style="left:987px;top:305px;width:1px;height:24px;background:#8c8c8c"></div>
<svg style="left:997px;top:309px" width="16" height="16" viewBox="0 0 16 16"><rect x="0.5" y="9.5" width="6" height="6" fill="#e4e4e4" stroke="#9a9a9a" stroke-width="1"/><path d="M2 14l3-3M3 11h2v2" stroke="#6a6a6a" fill="none"/><rect x="7.5" y="0.5" width="8" height="8" fill="#d8d8d8" stroke="#9a9a9a" stroke-width="1"/><rect x="5.5" y="3.5" width="3" height="4" fill="#e8e8e8" stroke="#9a9a9a" stroke-width="1"/></svg>
<svg style="left:1025px;top:309px" width="16" height="16" viewBox="0 0 16 16"><text x="3" y="7" font-family="Liberation Sans" font-weight="700" font-size="7" fill="#8a8a8a">S/N</text><rect x="0.5" y="9.5" width="6" height="6" fill="#e4e4e4" stroke="#9a9a9a" stroke-width="1"/><path d="M2 14l3-3M3 11h2v2" stroke="#6a6a6a" fill="none"/></svg>
<div style="left:1049px;top:305px;width:1px;height:24px;background:#8c8c8c"></div>
<svg style="left:1059px;top:309px" width="16" height="16" viewBox="0 0 16 16"><rect x="0.5" y="0.5" width="7" height="7" fill="#fff" stroke="#d01818" stroke-width="1"/><path d="M2 4h4M4 2v4" stroke="#111" stroke-width="1.3"/><rect x="10.5" y="3.5" width="3" height="2" fill="#fff" stroke="#777" stroke-width="1"/><rect x="10.5" y="8.5" width="3" height="2" fill="#fff" stroke="#777" stroke-width="1"/><rect x="10.5" y="13.5" width="3" height="2" fill="#fff" stroke="#777" stroke-width="1"/></svg>
<svg style="left:1084.0px;top:315px" width="7" height="4" viewBox="0 0 7 4"><path d="M0 0H7L3.5 4Z" fill="#1e1e1e"/></svg>
<svg style="left:1100px;top:309px" width="16" height="16" viewBox="0 0 16 16"><path d="M1 1.5H13.5L8.8 7.2V14.2A1.5 1.5 0 0 1 5.8 14.2V7.2Z" fill="#fff" stroke="#4f7db5" stroke-width="1.1" stroke-linejoin="round"/></svg>
<svg style="left:1125.0px;top:315px" width="7" height="4" viewBox="0 0 7 4"><path d="M0 0H7L3.5 4Z" fill="#1e1e1e"/></svg>
<svg style="left:1141px;top:309px" width="16" height="16" viewBox="0 0 16 16"><rect x="1.6" y="0.6" width="4.8" height="3.8" fill="#fff" stroke="#1c6fd1" stroke-width="1.2"/><rect x="1.6" y="6.1" width="4.8" height="3.8" fill="#fff" stroke="#1c6fd1" stroke-width="1.2"/><rect x="1.6" y="11.6" width="4.8" height="3.8" fill="#fff" stroke="#1c6fd1" stroke-width="1.2"/><path d="M8.5 0.5V15" stroke="#555" stroke-width="1"/><path d="M14 11V5.5H11" stroke="#1c6fd1" fill="none" stroke-width="1.2"/><path d="M11.5 3.3L9.2 5.5L11.5 7.7Z" fill="#1c6fd1"/><rect x="10.5" y="11.5" width="5" height="4" fill="#e8e8e8" stroke="#6a6a6a"/></svg>
<div style="left:1165px;top:305px;width:1px;height:24px;background:#8c8c8c"></div>
<svg style="left:1175px;top:309px" width="16" height="16" viewBox="0 0 16 16"><rect x="1.5" y="2.5" width="13" height="12" fill="#fff" stroke="#5f6a74" stroke-width="1"/><rect x="1" y="2" width="14" height="2" fill="#1c6fd1"/><line x1="6.5" y1="4" x2="6.5" y2="15" stroke="#5f6a74" stroke-width="1"/><line x1="2.5" y1="6.5" x2="5" y2="6.5" stroke="#5f6a74" stroke-width="1"/><line x1="8" y1="6.5" x2="9.5" y2="6.5" stroke="#5f6a74" stroke-width="1"/><line x1="10.5" y1="6.5" x2="13.5" y2="6.5" stroke="#5f6a74" stroke-width="1"/><line x1="2.5" y1="8.5" x2="5" y2="8.5" stroke="#5f6a74" stroke-width="1"/><line x1="8" y1="8.5" x2="9.5" y2="8.5" stroke="#5f6a74" stroke-width="1"/><line x1="10.5" y1="8.5" x2="13.5" y2="8.5" stroke="#5f6a74" stroke-width="1"/><line x1="2.5" y1="10.5" x2="5" y2="10.5" stroke="#5f6a74" stroke-width="1"/><line x1="8" y1="10.5" x2="9.5" y2="10.5" stroke="#5f6a74" stroke-width="1"/><line x1="10.5" y1="10.5" x2="13.5" y2="10.5" stroke="#5f6a74" stroke-width="1"/><line x1="2.5" y1="12.5" x2="5" y2="12.5" stroke="#5f6a74" stroke-width="1"/><line x1="8" y1="12.5" x2="9.5" y2="12.5" stroke="#5f6a74" stroke-width="1"/><line x1="10.5" y1="12.5" x2="13.5" y2="12.5" stroke="#5f6a74" stroke-width="1"/></svg>
<svg style="left:1203px;top:309px" width="16" height="16" viewBox="0 0 16 16"><rect x="1.5" y="1.5" width="2" height="2" fill="#fff" stroke="#1c6fd1" stroke-width="1"/><rect x="1.5" y="6.5" width="2" height="2" fill="#fff" stroke="#1c6fd1" stroke-width="1"/><rect x="1.5" y="11.5" width="2" height="2" fill="#fff" stroke="#1c6fd1" stroke-width="1"/><rect x="5.5" y="3.5" width="9" height="11" fill="#fff" stroke="#6a7480" stroke-width="1"/><rect x="5" y="3" width="10" height="2" fill="#1c6fd1"/><line x1="8.5" y1="5" x2="8.5" y2="15" stroke="#6a7480" stroke-width="1"/><line x1="11.5" y1="5" x2="11.5" y2="15" stroke="#6a7480" stroke-width="1"/></svg>
<svg style="left:1231px;top:309px" width="16" height="16" viewBox="0 0 16 16"><g fill="none" stroke="#1565c0" stroke-width="1.5" stroke-linecap="round" stroke-linejoin="round"><path d="M3.4 2.8C5.5 0 10.8 -0.2 12.5 5.5V9"/><path d="M10 6.8L12.5 9.3L15 6.8"/><path d="M12.5 12.4C10.5 15.4 5 15.4 3.4 9.5V6"/><path d="M1 8.2L3.4 5.7L5.8 8.2"/></g></svg>
<div class="t" style="left:705px;top:347.84px;font-size:12px;font-weight:700;color:#000;">Документы</div>
<div style="left:704px;top:372px;width:920px;height:128px;border:1px solid #828790;box-sizing:border-box;background:#fff;"></div>
<div class="t" style="left:712.5px;top:380.19px;font-size:11px;font-weight:400;color:#000;">Заголовок</div>
<div style="left:1015px;top:374px;width:1px;height:22px;background:#e5e5e5"></div>
<div class="t" style="left:1022.5px;top:380.19px;font-size:11px;font-weight:400;color:#000;">Тип документа</div>
<div style="left:1154px;top:374px;width:1px;height:22px;background:#e5e5e5"></div>
<div class="t" style="left:1160.5px;top:380.19px;font-size:11px;font-weight:400;color:#000;">Архив</div>
<div style="left:1306px;top:374px;width:1px;height:22px;background:#e5e5e5"></div>
<div class="t" style="left:1313.5px;top:380.19px;font-size:11px;font-weight:400;color:#000;">Имя файла</div>
<div style="left:1426px;top:374px;width:1px;height:22px;background:#e5e5e5"></div>
<div class="t" style="left:1433.5px;top:380.19px;font-size:11px;font-weight:400;color:#000;">Владелец</div>
<div style="left:1617px;top:374px;width:1px;height:22px;background:#e5e5e5"></div>
<svg style="left:729px;top:396px" width="16" height="16" viewBox="0 0 16 16"><rect x="1.5" y="1.5" width="13" height="14" fill="#3a6fb5" stroke="#2f5f9f" stroke-width="1"/><rect x="3" y="5" width="2" height="1.2" fill="#fff"/><rect x="6.5" y="5" width="4" height="1.2" fill="#fff"/><rect x="11.5" y="5" width="2" height="1.2" fill="#fff"/><rect x="3" y="7" width="2" height="1.2" fill="#fff"/><rect x="6.5" y="7" width="4" height="1.2" fill="#fff"/><rect x="11.5" y="7" width="2" height="1.2" fill="#fff"/><rect x="3" y="9" width="2" height="1.2" fill="#fff"/><rect x="6.5" y="9" width="4" height="1.2" fill="#fff"/><rect x="11.5" y="9" width="2" height="1.2" fill="#fff"/><rect x="3" y="11" width="2" height="1.2" fill="#fff"/><rect x="6.5" y="11" width="4" height="1.2" fill="#fff"/><rect x="11.5" y="11" width="2" height="1.2" fill="#fff"/><rect x="2" y="13" width="12" height="2" fill="#7a9ccc"/><rect x="2" y="2" width="12" height="2" fill="#6a8fc4"/></svg>
<div class="t" style="left:747.5px;top:400.69px;font-size:11px;font-weight:400;color:#000;">КДМ 1000.00.00.010 ( Версия:0 )</div>
<div class="t" style="left:1022.5px;top:400.69px;font-size:11px;font-weight:400;color:#000;">Спецификация</div>
<div class="t" style="left:1160.5px;top:400.69px;font-size:11px;font-weight:400;color:#000;">Демонстрационный архив</div>
<div class="t" style="left:1313.5px;top:400.69px;font-size:11px;font-weight:400;color:#000;">D10766_5.SP</div>
<div class="t" style="left:1433.5px;top:400.69px;font-size:11px;font-weight:400;color:#000;"></div>
<svg style="left:729px;top:413px" width="16" height="16" viewBox="0 0 16 16"><path d="M1.5 1.5h10v2h-8v12h-2z" fill="#fff" stroke="#3f72b5"/><rect x="3.5" y="3.5" width="11" height="12" fill="#fff" stroke="#3f72b5" stroke-width="1"/><rect x="6" y="5" width="6" height="1.2" fill="#2f62a8"/><rect x="4.8" y="5" width="0.8" height="1.2" fill="#2f62a8"/><rect x="12.5" y="5" width="0.8" height="1.2" fill="#2f62a8"/><rect x="6" y="7.3" width="6" height="1.2" fill="#2f62a8"/><rect x="4.8" y="7.3" width="0.8" height="1.2" fill="#2f62a8"/><rect x="12.5" y="7.3" width="0.8" height="1.2" fill="#2f62a8"/><rect x="6" y="9.6" width="6" height="1.2" fill="#2f62a8"/><rect x="4.8" y="9.6" width="0.8" height="1.2" fill="#2f62a8"/><rect x="12.5" y="9.6" width="0.8" height="1.2" fill="#2f62a8"/><rect x="6" y="11.9" width="6" height="1.2" fill="#2f62a8"/><rect x="4.8" y="11.9" width="0.8" height="1.2" fill="#2f62a8"/><rect x="12.5" y="11.9" width="0.8" height="1.2" fill="#2f62a8"/></svg>
<svg style="left:710px;top:413.5px" width="16" height="16" viewBox="0 0 16 16"><path d="M1.8 14.2l.9-3.6l8.6-8.6l2.7 2.7l-8.6 8.6z" fill="#f7c21b" stroke="#3a2a00" stroke-width=".9" stroke-linejoin="round"/><path d="M4 11.5l8-8" stroke="#fff6b0" stroke-width="1"/><path d="M11.3 2l2.7 2.7l1-1c.6-.6.6-1.4 0-2l-.7-.7c-.6-.6-1.4-.6-2 0z" fill="#d07a3a" stroke="#6b3a10" stroke-width=".6"/><path d="M1.8 14.2l.9-3.4l2.5 2.5z" fill="#f4e6c8"/><path d="M1.8 14.2l.4-1.4l1 1z" fill="#111"/></svg>
<div class="t" style="left:747.5px;top:417.69px;font-size:11px;font-weight:400;color:#000;">КДМ 1000.00.00.010 1 ВТ ( Версия:0 )</div>
<div class="t" style="left:1022.5px;top:417.69px;font-size:11px;font-weight:400;color:#000;">Комплект ведомостей</div>
<div class="t" style="left:1160.5px;top:417.69px;font-size:11px;font-weight:400;color:#000;">Архив техпроцессов</div>
<div class="t" style="left:1313.5px;top:417.69px;font-size:11px;font-weight:400;color:#000;">VTC7746.VTC</div>
<div class="t" style="left:1433.5px;top:417.69px;font-size:11px;font-weight:400;color:#000;">Системный администратор</div>
<svg style="left:729px;top:430px" width="16" height="16" viewBox="0 0 16 16"><polygon points="1.20,7.50 4.60,1.90 11.40,1.90 14.80,7.50 11.40,13.10 4.60,13.10" fill="#2a5fa6"/><line x1="0.20" y1="7.5" x2="15.80" y2="7.5" stroke="#fff" stroke-width="0.8"/><line x1="4.60" y1="1.90" x2="11.40" y2="13.10" stroke="#fff" stroke-width="0.8"/><line x1="11.40" y1="1.90" x2="4.60" y2="13.10" stroke="#fff" stroke-width="0.8"/><circle cx="8" cy="7.5" r="1.3" fill="#fff"/></svg>
<svg style="left:710px;top:430.5px" width="16" height="16" viewBox="0 0 16 16"><path d="M1.8 14.2l.9-3.6l8.6-8.6l2.7 2.7l-8.6 8.6z" fill="#f7c21b" stroke="#3a2a00" stroke-width=".9" stroke-linejoin="round"/><path d="M4 11.5l8-8" stroke="#fff6b0" stroke-width="1"/><path d="M11.3 2l2.7 2.7l1-1c.6-.6.6-1.4 0-2l-.7-.7c-.6-.6-1.4-.6-2 0z" fill="#d07a3a" stroke="#6b3a10" stroke-width=".6"/><path d="M1.8 14.2l.9-3.4l2.5 2.5z" fill="#f4e6c8"/><path d="M1.8 14.2l.4-1.4l1 1z" fill="#111"/></svg>
<div class="t" style="left:747.5px;top:433.84px;font-size:12px;font-weight:700;color:#000;letter-spacing:0.327px;">КДМ 1000.00.00.010 Б1 ТП ( Версия:0 )</div>
<div class="t" style="left:1022.5px;top:433.84px;font-size:12px;font-weight:700;color:#000;letter-spacing:-0.007px;">Техпроцесс</div>
<div class="t" style="left:1160.5px;top:433.84px;font-size:12px;font-weight:700;color:#000;letter-spacing:-0.14px;">Архив техпроцессов</div>
<div class="t" style="left:1313.5px;top:433.84px;font-size:12px;font-weight:700;color:#000;letter-spacing:0.086px;">TC92.tp</div>
<div class="t" style="left:1433.5px;top:433.84px;font-size:12px;font-weight:700;color:#000;"></div>
<div style="left:699px;top:506px;width:930px;height:18px;background:linear-gradient(#f1f1f1,#e9e9e9)"></div>
<div style="left:699px;top:505px;width:930px;height:1px;background:#d7d7d7"></div>
<div style="left:748px;top:507px;width:1px;height:15px;background:#d2d2d2"></div>
<div style="left:998px;top:507px;width:1px;height:15px;background:#d2d2d2"></div>
<div style="left:1198px;top:507px;width:1px;height:15px;background:#d2d2d2"></div>
<div style="left:1398px;top:507px;width:1px;height:15px;background:#d2d2d2"></div>
<div style="left:1625px;top:514px;width:2px;height:2px;background:#b4b4b4"></div>
<div style="left:1622px;top:517px;width:2px;height:2px;background:#b4b4b4"></div>
<div style="left:1625px;top:517px;width:2px;height:2px;background:#b4b4b4"></div>
<div style="left:1619px;top:520px;width:2px;height:2px;background:#b4b4b4"></div>
<div style="left:1622px;top:520px;width:2px;height:2px;background:#b4b4b4"></div>
<div style="left:1625px;top:520px;width:2px;height:2px;background:#b4b4b4"></div>
<div class="t" style="left:701px;top:509.84px;font-size:12px;font-weight:400;color:#000;">3</div>
<div style="left:698px;top:527px;width:932px;height:245px;background:#f0f0f0"></div>
<div style="left:698px;top:527px;width:932px;height:245px;border:1px solid #9f9f9f;box-sizing:border-box;"></div>
<div style="left:699px;top:528px;width:930px;height:30px;background:#fff"></div>
<svg style="left:706px;top:534px" width="16" height="16" viewBox="0 0 16 16"><rect x="0.5" y="0.5" width="5" height="5" fill="#f5a04a" stroke="#a14a0a" stroke-width="1"/><rect x="10.5" y="0.5" width="5" height="5" fill="#f5a04a" stroke="#a14a0a" stroke-width="1"/><rect x="0.5" y="10.5" width="5" height="5" fill="#f5a04a" stroke="#a14a0a" stroke-width="1"/><rect x="10.5" y="10.5" width="5" height="5" fill="#f5a04a" stroke="#a14a0a" stroke-width="1"/><path d="M6 3h2.5" stroke="#1f5fb3" stroke-width="1.2"/><path d="M8 0.8l2.2 2.2l-2.2 2.2z" fill="#1f5fb3"/><path d="M13 6v2" stroke="#1f5fb3" stroke-width="1.2"/><path d="M10.8 7.8l2.2 2.2l2.2-2.2z" fill="#1f5fb3"/><path d="M10 13h-2.5" stroke="#1f5fb3" stroke-width="1.2"/><path d="M8 10.8l-2.2 2.2l2.2 2.2z" fill="#1f5fb3"/></svg>
<div class="t" style="left:728px;top:537.49px;font-size:12.3px;font-weight:400;color:#000;transform:scaleX(0.951);transform-origin:0 0;">Расцеховочный маршрут КДМ 1000.00.00.010 &quot;Гайка&quot;</div>
<div style="left:1510px;top:542px;width:10px;height:1px;background:#000"></div>
<div style="left:1555px;top:537px;width:10px;height:10px;border:1px solid #000;box-sizing:border-box;"></div>
<svg style="left:1600px;top:536px" width="12" height="12" viewBox="0 0 12 12"><path d="M1 1L11 11M11 1L1 11" stroke="#000" stroke-width="1.05" fill="none"/></svg>
<svg style="left:710px;top:568px" width="16" height="16" viewBox="0 0 16 16"><rect x="0.5" y="0.5" width="5" height="5" fill="#f5a04a" stroke="#a14a0a" stroke-width="1"/><rect x="10.5" y="0.5" width="5" height="5" fill="#f5a04a" stroke="#a14a0a" stroke-width="1"/><rect x="0.5" y="10.5" width="5" height="5" fill="#f5a04a" stroke="#a14a0a" stroke-width="1"/><rect x="10.5" y="10.5" width="5" height="5" fill="#f5a04a" stroke="#a14a0a" stroke-width="1"/><path d="M6 3h2.5" stroke="#1f5fb3" stroke-width="1.2"/><path d="M8 0.8l2.2 2.2l-2.2 2.2z" fill="#1f5fb3"/><path d="M13 6v2" stroke="#1f5fb3" stroke-width="1.2"/><path d="M10.8 7.8l2.2 2.2l2.2-2.2z" fill="#1f5fb3"/><path d="M10 13h-2.5" stroke="#1f5fb3" stroke-width="1.2"/><path d="M8 10.8l-2.2 2.2l2.2 2.2z" fill="#1f5fb3"/></svg>
<svg style="left:738px;top:568px" width="16" height="16" viewBox="0 0 16 16"><polygon points="13.40,6.80 13.27,8.09 11.05,8.56 10.62,9.36 11.47,11.47 10.47,12.29 8.56,11.05 7.70,11.31 6.80,13.40 5.51,13.27 5.04,11.05 4.24,10.62 2.13,11.47 1.31,10.47 2.55,8.56 2.29,7.70 0.20,6.80 0.33,5.51 2.55,5.04 2.98,4.24 2.13,2.13 3.13,1.31 5.04,2.55 5.90,2.29 6.80,0.20 8.09,0.33 8.56,2.55 9.36,2.98 11.47,2.13 12.29,3.13 11.05,5.04 11.31,5.90" fill="#f5cc1a" stroke="#9a6a00" stroke-width="0.9" stroke-linejoin="round"/><circle cx="6.8" cy="6.8" r="1.8" fill="#fff" stroke="#9a6a00" stroke-width="0.7"/><path d="M9 10.5h3v-2l3.5 3l-3.5 3v-2h-3z" fill="#8ec4f4" stroke="#1c6fd1" stroke-width=".9"/></svg>
<svg style="left:763.0px;top:574px" width="7" height="4" viewBox="0 0 7 4"><path d="M0 0H7L3.5 4Z" fill="#1e1e1e"/></svg>
<svg style="left:779px;top:568px" width="16" height="16" viewBox="0 0 16 16"><rect x="0.5" y="0.5" width="13" height="15" fill="#cfe4fa" stroke="#1c6fd1" stroke-width="1"/><circle cx="8" cy="7" r="4" fill="#fff" stroke="#333" stroke-width="1.3"/><path d="M5 10l-3.5 4" stroke="#e8a020" stroke-width="2"/></svg>
<svg style="left:807px;top:568px" width="16" height="16" viewBox="0 0 16 16"><path d="M2.5 13.5l1-3.5l8-8l2.5 2.5l-8 8z" fill="#bdbdbd" stroke="#7d7d7d" stroke-width="0.9"/><path d="M11.5 2l2.5 2.5l1-1a1.2 1.2 0 0 0 0-1.6l-.9-.9a1.2 1.2 0 0 0-1.6 0z" fill="#8d8d8d"/></svg>
<svg style="left:835px;top:568px" width="16" height="16" viewBox="0 0 16 16"><path d="M1.5 0.5h6l3 3v10h-9z" fill="#dadada" stroke="#9a9a9a"/><path d="M7.5 0.5v3h3" fill="none" stroke="#9a9a9a"/><circle cx="11.5" cy="11.5" r="3.8" fill="#ececec" stroke="#8a8a8a" stroke-width="1.3"/><path d="M9 14l5-5" stroke="#8a8a8a" stroke-width="1.3"/></svg>
<svg style="left:863px;top:568px" width="16" height="16" viewBox="0 0 16 16"><circle cx="8" cy="8" r="6.8" fill="none" stroke="#8a8a8a" stroke-width="1.5"/><path d="M3.5 12.5l9-9" stroke="#8a8a8a" stroke-width="1.5"/></svg>
<svg style="left:891px;top:568px" width="16" height="16" viewBox="0 0 16 16"><path d="M1.5 1.5l13 13M14.5 1.5l-13 13" stroke="#6f6f6f" stroke-width="1.5"/></svg>
<div style="left:915px;top:564px;width:1px;height:24px;background:#8c8c8c"></div>
<svg style="left:925px;top:568px" width="16" height="16" viewBox="0 0 16 16"><rect x="0.5" y="0.5" width="5" height="5" fill="#d4d4d4" stroke="#a8a8a8" stroke-width="1"/><path d="M6 3h2.5v11h3M8.5 8.5h3" stroke="#9a9a9a" fill="none"/><rect x="11.5" y="2.5" width="3" height="3" fill="#e6e6e6" stroke="#9a9a9a" stroke-width="1"/><rect x="11.5" y="7.5" width="3" height="3" fill="#e6e6e6" stroke="#9a9a9a" stroke-width="1"/><rect x="11.5" y="12.5" width="3" height="3" fill="#e6e6e6" stroke="#9a9a9a" stroke-width="1"/></svg>
<svg style="left:953px;top:568px" width="16" height="16" viewBox="0 0 16 16"><rect x="1.5" y="1.5" width="13" height="14" fill="#dedede" stroke="#a0a0a0" stroke-width="1"/><path d="M3 4.5l1.5 1.5l2.5-3" stroke="#8a8a8a" fill="none"/><rect x="7" y="5" width="6" height="1.6" fill="#a0a0a0"/><rect x="7" y="8" width="6" height="1.6" fill="#a0a0a0"/><rect x="7" y="11" width="6" height="1.6" fill="#a0a0a0"/></svg>
<div style="left:977px;top:564px;width:1px;height:24px;background:#8c8c8c"></div>
<svg style="left:987px;top:568px" width="16" height="16" viewBox="0 0 16 16"><rect x="0.5" y="0.5" width="9" height="14" fill="#e8e8e8" stroke="#9a9a9a" stroke-width="1"/><rect x="2.5" y="2.5" width="5" height="4" fill="#d8d8d8" stroke="#7a7a7a" stroke-width="1"/><rect x="2.5" y="8.5" width="5" height="4" fill="#d8d8d8" stroke="#7a7a7a" stroke-width="1"/><path d="M9.0 12.0h3.3v-2.2l3.4 3.2l-3.4 3.2v-2.2h-3.3z" fill="#dcdcdc" stroke="#9a9a9a" stroke-width="1" stroke-linejoin="miter"/></svg>
<svg style="left:1015px;top:568px" width="16" height="16" viewBox="0 0 16 16"><path d="M1.5 0.5h6l3 3v10h-9z" fill="#dadada" stroke="#a0a0a0"/><path d="M7.5 0.5v3h3" fill="none" stroke="#a0a0a0"/><circle cx="11.5" cy="11.5" r="4.3" fill="#6f6f6f"/><path d="M9.3 11.5l1.6 1.6l2.8-2.8" stroke="#fff" stroke-width="1.4" fill="none"/></svg>
<svg style="left:1043px;top:568px" width="16" height="16" viewBox="0 0 16 16"><circle cx="8" cy="8" r="7.5" fill="#8c8c8c"/><path d="M6.8 3h2.4l-.5 6.5h-1.4z" fill="#5a5a5a"/><circle cx="8" cy="11.8" r="1.2" fill="#5a5a5a"/></svg>
<div style="left:1067px;top:564px;width:1px;height:24px;background:#8c8c8c"></div>
<svg style="left:1077px;top:568px" width="16" height="16" viewBox="0 0 16 16"><rect x="0.5" y="9.5" width="6" height="6" fill="#e4e4e4" stroke="#9a9a9a" stroke-width="1"/><path d="M2 14l3-3M3 11h2v2" stroke="#6a6a6a" fill="none"/><rect x="7.5" y="0.5" width="8" height="8" fill="#d8d8d8" stroke="#9a9a9a" stroke-width="1"/><rect x="5.5" y="3.5" width="3" height="4" fill="#e8e8e8" stroke="#9a9a9a" stroke-width="1"/></svg>
<svg style="left:1105px;top:568px" width="16" height="16" viewBox="0 0 16 16"><polygon points="15.50,6.50 12.50,11.70 6.50,11.70 3.50,6.50 6.50,1.30 12.50,1.30" fill="#8a8a8a"/><path d="M3.5 6.5h12M6.5 1.3l6 10.4M12.5 1.3l-6 10.4" stroke="#e8e8e8" stroke-width=".9"/><rect x="0.5" y="9.5" width="6" height="6" fill="#e4e4e4" stroke="#9a9a9a" stroke-width="1"/><path d="M2 14l3-3M3 11h2v2" stroke="#6a6a6a" fill="none"/></svg>
<svg style="left:1133px;top:568px" width="16" height="16" viewBox="0 0 16 16"><path d="M6 2a3 2 0 0 1 6 0v6h-6z" fill="#cfcfcf" stroke="#9a9a9a"/><path d="M9 9l3-2l4 2v4l-3 2l-4-2z" fill="#d8d8d8" stroke="#9a9a9a"/><rect x="0.5" y="9.5" width="6" height="6" fill="#e4e4e4" stroke="#9a9a9a" stroke-width="1"/><path d="M2 14l3-3M3 11h2v2" stroke="#6a6a6a" fill="none"/></svg>
<svg style="left:1161px;top:568px" width="16" height="16" viewBox="0 0 16 16"><path d="M9 1h2l5 11h-2z" fill="#bdbdbd" stroke="#9a9a9a" stroke-width=".8"/><path d="M7 5h2l4 9h-2z" fill="#c8c8c8" stroke="#9a9a9a" stroke-width=".8"/><rect x="0.5" y="9.5" width="6" height="6" fill="#e4e4e4" stroke="#9a9a9a" stroke-width="1"/><path d="M2 14l3-3M3 11h2v2" stroke="#6a6a6a" fill="none"/></svg>
<div style="left:1185px;top:564px;width:1px;height:24px;background:#8c8c8c"></div>
<svg style="left:1195px;top:568px" width="16" height="16" viewBox="0 0 16 16"><path d="M2.5 4v10.5h4M2.5 6.5h4M2.5 10.5h4M9.5 10.5h3M9.5 14.5h3" stroke="#6b5d52" fill="none" stroke-width="1.1"/><rect x="0.6" y="0.6" width="3.8" height="2.8" rx=".6" fill="#fff" stroke="#0a78d8" stroke-width="1.2"/><rect x="6.6" y="5.6" width="2.8" height="1.8" rx=".6" fill="#fff" stroke="#0a78d8" stroke-width="1.2"/><rect x="6.6" y="9.6" width="2.8" height="1.8" rx=".6" fill="#fff" stroke="#0a78d8" stroke-width="1.2"/><rect x="12.6" y="9.6" width="2.8" height="1.8" rx=".6" fill="#fff" stroke="#0a78d8" stroke-width="1.2"/><rect x="6.6" y="13.6" width="2.8" height="1.8" rx=".6" fill="#fff" stroke="#0a78d8" stroke-width="1.2"/><rect x="12.6" y="13.6" width="2.8" height="1.8" rx=".6" fill="#fff" stroke="#0a78d8" stroke-width="1.2"/></svg>
<svg style="left:1220.0px;top:574px" width="7" height="4" viewBox="0 0 7 4"><path d="M0 0H7L3.5 4Z" fill="#1e1e1e"/></svg>
<svg style="left:1236px;top:568px" width="16" height="16" viewBox="0 0 16 16"><path d="M1 1.5H13.5L8.8 7.2V14.2A1.5 1.5 0 0 1 5.8 14.2V7.2Z" fill="#fff" stroke="#4f7db5" stroke-width="1.1" stroke-linejoin="round"/></svg>
<svg style="left:1261.0px;top:574px" width="7" height="4" viewBox="0 0 7 4"><path d="M0 0H7L3.5 4Z" fill="#1e1e1e"/></svg>
<div style="left:1271px;top:562px;width:28px;height:27px;border:1px solid #99d1ff;box-sizing:border-box;background:#cce8ff;"></div>
<svg style="left:1277px;top:568px" width="16" height="16" viewBox="0 0 16 16"><rect x="1.6" y="0.6" width="4.8" height="3.8" fill="#fff" stroke="#1c6fd1" stroke-width="1.2"/><rect x="1.6" y="6.1" width="4.8" height="3.8" fill="#fff" stroke="#1c6fd1" stroke-width="1.2"/><rect x="1.6" y="11.6" width="4.8" height="3.8" fill="#fff" stroke="#1c6fd1" stroke-width="1.2"/><path d="M8.5 0.5V15" stroke="#555" stroke-width="1"/><path d="M14 11V5.5H11" stroke="#1c6fd1" fill="none" stroke-width="1.2"/><path d="M11.5 3.3L9.2 5.5L11.5 7.7Z" fill="#1c6fd1"/><rect x="10.5" y="11.5" width="5" height="4" fill="#e8e8e8" stroke="#6a6a6a"/></svg>
<div style="left:1301px;top:564px;width:1px;height:24px;background:#8c8c8c"></div>
<svg style="left:1311px;top:568px" width="16" height="16" viewBox="0 0 16 16"><rect x="0.5" y="0.5" width="4" height="4" fill="#fff" stroke="#444" stroke-width="1"/><rect x="11.5" y="0.5" width="4" height="4" fill="#fff" stroke="#444" stroke-width="1"/><rect x="0.5" y="11.5" width="4" height="4" fill="#fff" stroke="#444" stroke-width="1"/><rect x="11.5" y="11.5" width="4" height="4" fill="#fff" stroke="#444" stroke-width="1"/><path d="M5 2.5h5M13.5 5v5M11 13.5h-5" stroke="#1c5fb0" fill="none"/><path d="M9 0.5l2 2l-2 2zM11.5 9l2 2.5l2-2.5zM7 11.5l-2 2l2 2z" fill="#1c5fb0"/></svg>
<div style="left:1335px;top:564px;width:1px;height:24px;background:#8c8c8c"></div>
<svg style="left:1345px;top:568px" width="16" height="16" viewBox="0 0 16 16"><rect x="1.5" y="1.5" width="11" height="13" fill="#fff" stroke="#5a6670" stroke-width="1"/><rect x="1" y="1" width="12" height="2" fill="#1c6fd1"/><rect x="11.5" y="4.5" width="3" height="8" fill="#fff" stroke="#5a6670" stroke-width="1"/><line x1="3" y1="5.5" x2="10" y2="5.5" stroke="#5a6670" stroke-width="1"/><line x1="3" y1="8.5" x2="10" y2="8.5" stroke="#5a6670" stroke-width="1"/><line x1="3" y1="11.5" x2="10" y2="11.5" stroke="#5a6670" stroke-width="1"/></svg>
<svg style="left:1373px;top:568px" width="16" height="16" viewBox="0 0 16 16"><rect x="1.5" y="1.5" width="2" height="2" fill="#fff" stroke="#1c6fd1" stroke-width="1"/><rect x="1.5" y="6.5" width="2" height="2" fill="#fff" stroke="#1c6fd1" stroke-width="1"/><rect x="1.5" y="11.5" width="2" height="2" fill="#fff" stroke="#1c6fd1" stroke-width="1"/><rect x="5.5" y="3.5" width="9" height="11" fill="#fff" stroke="#6a7480" stroke-width="1"/><rect x="5" y="3" width="10" height="2" fill="#1c6fd1"/><line x1="8.5" y1="5" x2="8.5" y2="15" stroke="#6a7480" stroke-width="1"/><line x1="11.5" y1="5" x2="11.5" y2="15" stroke="#6a7480" stroke-width="1"/></svg>
<svg style="left:1401px;top:568px" width="16" height="16" viewBox="0 0 16 16"><g fill="none" stroke="#1565c0" stroke-width="1.5" stroke-linecap="round" stroke-linejoin="round"><path d="M3.4 2.8C5.5 0 10.8 -0.2 12.5 5.5V9"/><path d="M10 6.8L12.5 9.3L15 6.8"/><path d="M12.5 12.4C10.5 15.4 5 15.4 3.4 9.5V6"/><path d="M1 8.2L3.4 5.7L5.8 8.2"/></g></svg>
<svg style="left:1426.0px;top:574px" width="7" height="4" viewBox="0 0 7 4"><path d="M0 0H7L3.5 4Z" fill="#1e1e1e"/></svg>
<div style="left:704px;top:594px;width:920px;height:153px;border:1px solid #828790;box-sizing:border-box;background:#fff;"></div>
<div class="t" style="left:712.5px;top:602.69px;font-size:11px;font-weight:400;color:#000;">Изделие, на которое создана эта версия ...</div>
<div style="left:939px;top:596px;width:1px;height:22px;background:#e5e5e5"></div>
<div class="t" style="left:946.5px;top:602.69px;font-size:11px;font-weight:400;color:#000;">Строка маршрута</div>
<div style="left:1091px;top:596px;width:1px;height:22px;background:#e5e5e5"></div>
<div class="t" style="left:1098.5px;top:602.69px;font-size:11px;font-weight:400;color:#000;">Номер варианта...</div>
<div style="left:1196px;top:596px;width:1px;height:22px;background:#e5e5e5"></div>
<div class="t" style="left:1203px;top:602.69px;font-size:11px;font-weight:400;color:#000;">Номер версии маршрута</div>
<div style="left:1337px;top:596px;width:1px;height:22px;background:#e5e5e5"></div>
<div class="t" style="left:1344px;top:602.69px;font-size:11px;font-weight:400;color:#000;">Вид маршрута</div>
<div style="left:1439px;top:596px;width:1px;height:22px;background:#e5e5e5"></div>
<div class="t" style="left:1446.5px;top:602.69px;font-size:11px;font-weight:400;color:#000;">Тип маршрута</div>
<div style="left:1527px;top:596px;width:1px;height:22px;background:#e5e5e5"></div>
<div class="t" style="left:1534.5px;top:602.69px;font-size:11px;font-weight:400;color:#000;">Статус версии...</div>
<div style="left:1620px;top:596px;width:1px;height:22px;background:#e5e5e5"></div>
<svg style="left:729px;top:621px" width="16" height="16" viewBox="0 0 16 16"><path d="M1.5 5.5h7v-4l6.3 5.5l-6.3 5.5v-4h-7z" fill="#7ee86e" stroke="#1f8a1f" stroke-width="1.1" stroke-linejoin="miter"/></svg>
<div class="t" style="left:747.5px;top:623.34px;font-size:12px;font-weight:700;color:#000;letter-spacing:0.416px;">КДМ 1000.00.00.010 &quot;Гайка&quot;</div>
<div class="t" style="left:946.5px;top:623.34px;font-size:12px;font-weight:700;color:#000;letter-spacing:0.423px;">001/ Сб; 002/01 Сб</div>
<div class="t" style="left:1098.5px;top:623.34px;font-size:12px;font-weight:700;color:#000;"></div>
<div class="t" style="left:1203px;top:623.34px;font-size:12px;font-weight:700;color:#000;letter-spacing:0.827px;">0</div>
<div class="t" style="left:1344px;top:623.34px;font-size:12px;font-weight:700;color:#000;letter-spacing:-0.234px;">Единственный</div>
<div class="t" style="left:1446.5px;top:623.34px;font-size:12px;font-weight:700;color:#000;letter-spacing:-0.248px;">Постоянный</div>
<div class="t" style="left:1534.5px;top:623.34px;font-size:12px;font-weight:700;color:#000;letter-spacing:-0.223px;">В архиве</div>
<svg style="left:729px;top:638px" width="16" height="16" viewBox="0 0 16 16"><path d="M1.5 5.5h7v-4l6.3 5.5l-6.3 5.5v-4h-7z" fill="#7ee86e" stroke="#1f8a1f" stroke-width="1.1" stroke-linejoin="miter"/></svg>
<div class="t" style="left:747.5px;top:641.19px;font-size:11px;font-weight:400;color:#000;">КДМ 1000.00.00.011 &quot;Гайка&quot;</div>
<div class="t" style="left:946.5px;top:641.19px;font-size:11px;font-weight:400;color:#000;">001/ Мо; 006/ Г; 004/02 Сб</div>
<div class="t" style="left:1098.5px;top:641.19px;font-size:11px;font-weight:400;color:#000;">1</div>
<div class="t" style="left:1203px;top:641.19px;font-size:11px;font-weight:400;color:#000;">0</div>
<div class="t" style="left:1344px;top:641.19px;font-size:11px;font-weight:400;color:#000;">Единственный</div>
<div class="t" style="left:1446.5px;top:641.19px;font-size:11px;font-weight:400;color:#000;">Постоянный</div>
<div class="t" style="left:1534.5px;top:641.19px;font-size:11px;font-weight:400;color:#000;">В архиве</div>
<svg style="left:729px;top:655px" width="16" height="16" viewBox="0 0 16 16"><path d="M1.8 14.2l.9-3.6l8.6-8.6l2.7 2.7l-8.6 8.6z" fill="#f7c21b" stroke="#3a2a00" stroke-width=".9" stroke-linejoin="round"/><path d="M4 11.5l8-8" stroke="#fff6b0" stroke-width="1"/><path d="M11.3 2l2.7 2.7l1-1c.6-.6.6-1.4 0-2l-.7-.7c-.6-.6-1.4-.6-2 0z" fill="#d07a3a" stroke="#6b3a10" stroke-width=".6"/><path d="M1.8 14.2l.9-3.4l2.5 2.5z" fill="#f4e6c8"/><path d="M1.8 14.2l.4-1.4l1 1z" fill="#111"/></svg>
<div class="t" style="left:747.5px;top:658.19px;font-size:11px;font-weight:400;color:#008000;">КДМ 1000.00.00.011 &quot;Гайка&quot;</div>
<div class="t" style="left:946.5px;top:658.19px;font-size:11px;font-weight:400;color:#008000;">001/ Мо; 006/ Г; 002/01 Сб</div>
<div class="t" style="left:1098.5px;top:658.19px;font-size:11px;font-weight:400;color:#008000;"></div>
<div class="t" style="left:1203px;top:658.19px;font-size:11px;font-weight:400;color:#008000;">1</div>
<div class="t" style="left:1344px;top:658.19px;font-size:11px;font-weight:400;color:#008000;">Единственный</div>
<div class="t" style="left:1446.5px;top:658.19px;font-size:11px;font-weight:400;color:#008000;">Постоянный</div>
<div class="t" style="left:1534.5px;top:658.19px;font-size:11px;font-weight:400;color:#008000;">Рабочая копия</div>
<svg style="left:729px;top:672px" width="16" height="16" viewBox="0 0 16 16"><path d="M1.5 5.5h7v-4l6.3 5.5l-6.3 5.5v-4h-7z" fill="#7ee86e" stroke="#1f8a1f" stroke-width="1.1" stroke-linejoin="miter"/></svg>
<div class="t" style="left:747.5px;top:675.19px;font-size:11px;font-weight:400;color:#000;">КДМ 1000.00.00.012 &quot;Уплотнение&quot;</div>
<div class="t" style="left:946.5px;top:675.19px;font-size:11px;font-weight:400;color:#000;">001/ Мо; 002/01 Сб</div>
<div class="t" style="left:1098.5px;top:675.19px;font-size:11px;font-weight:400;color:#000;"></div>
<div class="t" style="left:1203px;top:675.19px;font-size:11px;font-weight:400;color:#000;">0</div>
<div class="t" style="left:1344px;top:675.19px;font-size:11px;font-weight:400;color:#000;">Единственный</div>
<div class="t" style="left:1446.5px;top:675.19px;font-size:11px;font-weight:400;color:#000;">Постоянный</div>
<div class="t" style="left:1534.5px;top:675.19px;font-size:11px;font-weight:400;color:#000;">В архиве</div>
<svg style="left:729px;top:689px" width="16" height="16" viewBox="0 0 16 16"><circle cx="8" cy="7.5" r="6.8" fill="none" stroke="#dd1f26" stroke-width="1.5"/><path d="M3.3 12.2l9.4-9.4" stroke="#dd1f26" stroke-width="1.5"/></svg>
<div class="t" style="left:747.5px;top:692.19px;font-size:11px;font-weight:400;color:#000;">КДМ 1000.00.00.011 &quot;Гайка&quot;</div>
<div class="t" style="left:946.5px;top:692.19px;font-size:11px;font-weight:400;color:#000;">001/ Мо; 002/01 Сб; 007/ О</div>
<div class="t" style="left:1098.5px;top:692.19px;font-size:11px;font-weight:400;color:#000;">2</div>
<div class="t" style="left:1203px;top:692.19px;font-size:11px;font-weight:400;color:#000;">1</div>
<div class="t" style="left:1344px;top:692.19px;font-size:11px;font-weight:400;color:#000;">Единственный</div>
<div class="t" style="left:1446.5px;top:692.19px;font-size:11px;font-weight:400;color:#000;">Постоянный</div>
<div class="t" style="left:1534.5px;top:692.19px;font-size:11px;font-weight:400;color:#000;">В архиве</div>
<div style="left:699px;top:753px;width:930px;height:18px;background:linear-gradient(#f1f1f1,#e9e9e9)"></div>
<div style="left:699px;top:752px;width:930px;height:1px;background:#d7d7d7"></div>
<div style="left:748px;top:754px;width:1px;height:15px;background:#d2d2d2"></div>
<div style="left:998px;top:754px;width:1px;height:15px;background:#d2d2d2"></div>
<div style="left:1198px;top:754px;width:1px;height:15px;background:#d2d2d2"></div>
<div style="left:1398px;top:754px;width:1px;height:15px;background:#d2d2d2"></div>
<div style="left:1625px;top:761px;width:2px;height:2px;background:#b4b4b4"></div>
<div style="left:1622px;top:764px;width:2px;height:2px;background:#b4b4b4"></div>
<div style="left:1625px;top:764px;width:2px;height:2px;background:#b4b4b4"></div>
<div style="left:1619px;top:767px;width:2px;height:2px;background:#b4b4b4"></div>
<div style="left:1622px;top:767px;width:2px;height:2px;background:#b4b4b4"></div>
<div style="left:1625px;top:767px;width:2px;height:2px;background:#b4b4b4"></div>
<div class="t" style="left:701px;top:756.84px;font-size:12px;font-weight:400;color:#000;">5</div>
</div></body></html>
